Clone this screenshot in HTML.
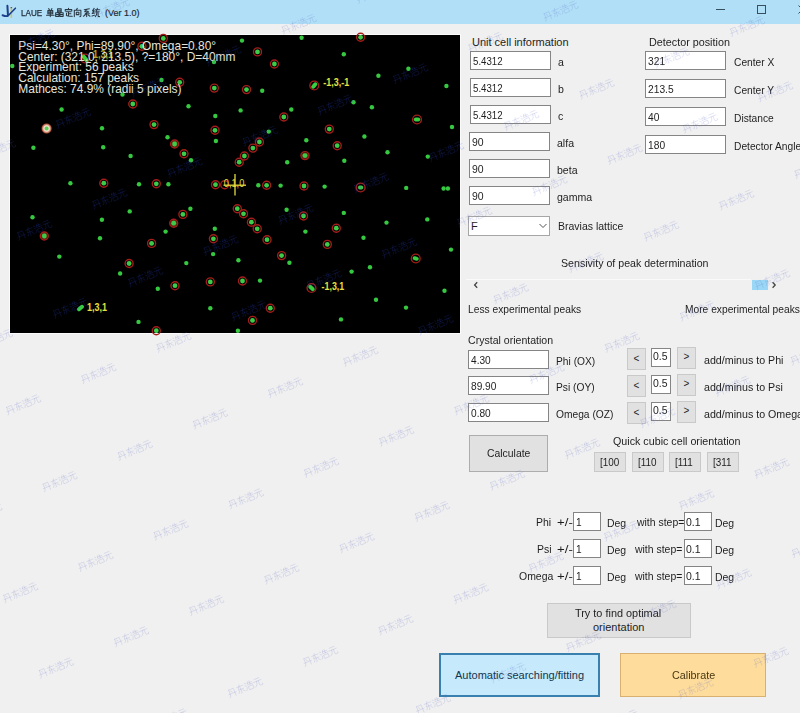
<!DOCTYPE html>
<html><head><meta charset="utf-8"><style>
html,body{margin:0;padding:0;}
body{width:800px;height:713px;position:relative;overflow:hidden;background:#f0f0f0;font-family:"Liberation Sans",sans-serif;}
.t{position:absolute;white-space:pre;}
#title{position:absolute;left:0;top:0;width:800px;height:24px;background:#b1dff7;}
.tb{position:absolute;box-sizing:border-box;border:1px solid #858585;background:#fff;}
.cb{position:absolute;box-sizing:border-box;border:1px solid #a6a6a6;background:#fff;}
.btn{position:absolute;box-sizing:border-box;border:1px solid #c9c9c9;background:#e1e1e1;}
svg{overflow:visible}
</style></head><body>
<div id="title"></div><svg style="position:absolute;left:0;top:0" width="20" height="22"><rect x="10.6" y="7.2" width="1.5" height="10.6" fill="#d6c24a"/><path d="M7.4 5.8 L8 15.6 Q6.5 16.8 2.6 15.2" fill="none" stroke="#1c3f8c" stroke-width="2" stroke-linecap="round"/><path d="M8.6 15.2 L15.4 8.2" fill="none" stroke="#1c3f8c" stroke-width="1.6" stroke-linecap="round"/><rect x="10.6" y="7" width="1.5" height="1.2" fill="#5a6070"/></svg><div class="t" style="left:21.00px;top:8.98px;font-size:9px;line-height:9px;color:#1c2a36;transform:scaleX(0.9);transform-origin:0 0;-webkit-text-stroke:0.25px #1c2a36;">LAUE</div><div class="t" style="left:105.00px;top:8.98px;font-size:9px;line-height:9px;color:#1c2a36;-webkit-text-stroke:0.2px #1c2a36;">(Ver 1.0)</div><svg style="position:absolute;left:0;top:0" width="120" height="24"><g fill="none" stroke="#2a3844" stroke-width="1.05" stroke-linecap="round" stroke-linejoin="round"><path transform="translate(46.20,8.40) scale(0.820)" d="M3 0.3 L3.9 1.6 M7 0.3 L6.1 1.6 M2 2.5 L8 2.5 L8 6.6 L2 6.6 Z M2 4.55 L8 4.55 M5 2.5 L5 10 M0.4 8.3 L9.6 8.3" vector-effect="non-scaling-stroke"/><path transform="translate(55.30,8.40) scale(0.820)" d="M2.8 0.4 h4.4 v3.6 h-4.4 Z M2.8 2.2 h4.4 M0.4 5.3 h4 v4.4 h-4 Z M0.4 7.5 h4 M5.6 5.3 h4 v4.4 h-4 Z M5.6 7.5 h4" vector-effect="non-scaling-stroke"/><path transform="translate(64.40,8.40) scale(0.820)" d="M5 0 L5 1.3 M1 3.2 L1 1.5 L9 1.5 L9 3.2 M2 4.2 L8 4.2 M5 4.2 L5 9.4 M5 6.6 L8 6.6 M2.7 5.8 L2.4 8.6 Q3.5 9.6 9.6 9.6" vector-effect="non-scaling-stroke"/><path transform="translate(73.50,8.40) scale(0.820)" d="M4.6 0 L3.6 1.6 M1 10 L1 2.2 L9 2.2 L9 9 Q9 10 7.8 10 M3.4 4.6 h3.2 v3 h-3.2 Z" vector-effect="non-scaling-stroke"/><path transform="translate(82.60,8.40) scale(0.820)" d="M8.2 0.4 L2 1.6 M5.2 1.6 L2.6 4 L7 4 L2.8 7 L8.2 6.4 M6.2 3.4 L7.4 4.6 M5 6.8 L5 10 M3 8.2 L1 9.6 M7 8.2 L9 9.6" vector-effect="non-scaling-stroke"/><path transform="translate(91.70,8.40) scale(0.820)" d="M3 0 L1 3 L3.2 3 L0.6 6.2 L3.8 5.6 M0.4 9.4 L3.8 8.2 M6.8 0 L6.8 1.1 M4.4 1.6 L9.6 1.6 M6.2 2 L5 4.4 L9.2 4.2 M6.2 5.2 Q6.2 8.4 4.4 10 M7.8 5.2 L7.8 9.2 Q7.8 10 9.6 10" vector-effect="non-scaling-stroke"/></g></svg><svg style="position:absolute;left:700px;top:0" width="100" height="24" fill="none" stroke="#36505e" stroke-width="1"><line x1="716" y1="9.5" x2="725" y2="9.5" transform="translate(-700,0)"/><rect x="57.5" y="5.5" width="8" height="8"/><path d="M98.5 5.5 L104 11 M98.5 13.5 L104 8"/></svg><div style="position:absolute;left:9px;top:34px;width:452px;height:300px;background:#fbfbfb"></div><svg style="position:absolute;left:10px;top:35px" width="450" height="298" viewBox="10 35 450 298"><defs><radialGradient id="bg"><stop offset="0" stop-color="#fff8f0"/><stop offset="0.5" stop-color="#f2d4c0"/><stop offset="0.78" stop-color="#b05a40"/><stop offset="1" stop-color="#501010" stop-opacity="0"/></radialGradient><filter id="bl" x="-50%" y="-50%" width="200%" height="200%"><feGaussianBlur stdDeviation="0.65"/></filter><filter id="bl2" x="-50%" y="-50%" width="200%" height="200%"><feGaussianBlur stdDeviation="0.45"/></filter></defs><rect x="10" y="35" width="450" height="298" fill="#000"/><g filter="url(#bl)"><circle cx="46.6" cy="128.5" r="5.8" fill="url(#bg)"/><circle cx="141.9" cy="46.3" r="4" fill="none" stroke="#a41e1a" stroke-width="1.4"/><circle cx="132.8" cy="104" r="4" fill="none" stroke="#a41e1a" stroke-width="1.4"/><circle cx="154" cy="124.6" r="4" fill="none" stroke="#a41e1a" stroke-width="1.4"/><circle cx="163.3" cy="38.4" r="4" fill="none" stroke="#a41e1a" stroke-width="1.4"/><circle cx="257.5" cy="51.9" r="4" fill="none" stroke="#a41e1a" stroke-width="1.4"/><circle cx="274.4" cy="64" r="4" fill="none" stroke="#a41e1a" stroke-width="1.4"/><circle cx="179.7" cy="82.3" r="4" fill="none" stroke="#a41e1a" stroke-width="1.4"/><circle cx="214.3" cy="88.1" r="4" fill="none" stroke="#a41e1a" stroke-width="1.4"/><circle cx="246.5" cy="89.6" r="4" fill="none" stroke="#a41e1a" stroke-width="1.4"/><circle cx="283.8" cy="117" r="4" fill="none" stroke="#a41e1a" stroke-width="1.4"/><circle cx="215" cy="130.3" r="4" fill="none" stroke="#a41e1a" stroke-width="1.4"/><circle cx="360.6" cy="37.3" r="4" fill="none" stroke="#a41e1a" stroke-width="1.4"/><circle cx="329.3" cy="129.1" r="4" fill="none" stroke="#a41e1a" stroke-width="1.4"/><circle cx="103.8" cy="183.2" r="4" fill="none" stroke="#a41e1a" stroke-width="1.4"/><circle cx="156.3" cy="183.8" r="4" fill="none" stroke="#a41e1a" stroke-width="1.4"/><circle cx="184" cy="153.8" r="4" fill="none" stroke="#a41e1a" stroke-width="1.4"/><circle cx="259.4" cy="142" r="4" fill="none" stroke="#a41e1a" stroke-width="1.4"/><circle cx="252.9" cy="148.1" r="4" fill="none" stroke="#a41e1a" stroke-width="1.4"/><circle cx="244.4" cy="156" r="4" fill="none" stroke="#a41e1a" stroke-width="1.4"/><circle cx="239.2" cy="162.2" r="4" fill="none" stroke="#a41e1a" stroke-width="1.4"/><circle cx="215.5" cy="184.7" r="4" fill="none" stroke="#a41e1a" stroke-width="1.4"/><circle cx="266.6" cy="185.3" r="4" fill="none" stroke="#a41e1a" stroke-width="1.4"/><circle cx="304" cy="186" r="4" fill="none" stroke="#a41e1a" stroke-width="1.4"/><circle cx="182.9" cy="214.4" r="4" fill="none" stroke="#a41e1a" stroke-width="1.4"/><circle cx="237.3" cy="208.7" r="4" fill="none" stroke="#a41e1a" stroke-width="1.4"/><circle cx="243.5" cy="213.8" r="4" fill="none" stroke="#a41e1a" stroke-width="1.4"/><circle cx="251.4" cy="222.2" r="4" fill="none" stroke="#a41e1a" stroke-width="1.4"/><circle cx="257.2" cy="228.8" r="4" fill="none" stroke="#a41e1a" stroke-width="1.4"/><circle cx="303.5" cy="216" r="4" fill="none" stroke="#a41e1a" stroke-width="1.4"/><circle cx="337.2" cy="145.7" r="4" fill="none" stroke="#a41e1a" stroke-width="1.4"/><circle cx="336.3" cy="228.2" r="4" fill="none" stroke="#a41e1a" stroke-width="1.4"/><circle cx="151.6" cy="243.4" r="4" fill="none" stroke="#a41e1a" stroke-width="1.4"/><circle cx="129.1" cy="263.5" r="4" fill="none" stroke="#a41e1a" stroke-width="1.4"/><circle cx="156.3" cy="330.7" r="4" fill="none" stroke="#a41e1a" stroke-width="1.4"/><circle cx="213.4" cy="238.8" r="4" fill="none" stroke="#a41e1a" stroke-width="1.4"/><circle cx="267" cy="239.7" r="4" fill="none" stroke="#a41e1a" stroke-width="1.4"/><circle cx="281.6" cy="255.6" r="4" fill="none" stroke="#a41e1a" stroke-width="1.4"/><circle cx="175" cy="285.7" r="4" fill="none" stroke="#a41e1a" stroke-width="1.4"/><circle cx="210.3" cy="281.9" r="4" fill="none" stroke="#a41e1a" stroke-width="1.4"/><circle cx="242.5" cy="281" r="4" fill="none" stroke="#a41e1a" stroke-width="1.4"/><circle cx="270.3" cy="308.2" r="4" fill="none" stroke="#a41e1a" stroke-width="1.4"/><circle cx="252.5" cy="320.4" r="4" fill="none" stroke="#a41e1a" stroke-width="1.4"/><circle cx="327.3" cy="244.4" r="4" fill="none" stroke="#a41e1a" stroke-width="1.4"/><circle cx="224.7" cy="184.7" r="4" fill="none" stroke="#a41e1a" stroke-width="1.4"/><circle cx="44.3" cy="236" r="4" fill="none" stroke="#a41e1a" stroke-width="1.4"/><circle cx="174.6" cy="144" r="4" fill="none" stroke="#a41e1a" stroke-width="1.4"/><circle cx="305" cy="155.6" r="4" fill="none" stroke="#a41e1a" stroke-width="1.4"/><circle cx="173.7" cy="223.2" r="4" fill="none" stroke="#a41e1a" stroke-width="1.4"/><circle cx="44.3" cy="236" r="3.2" fill="#b06028" fill-opacity="0.55"/><circle cx="174.6" cy="144" r="3.2" fill="#b06028" fill-opacity="0.55"/><circle cx="305" cy="155.6" r="3.2" fill="#b06028" fill-opacity="0.55"/><circle cx="173.7" cy="223.2" r="3.2" fill="#b06028" fill-opacity="0.55"/><circle cx="85.175" cy="58.5" r="4.4" fill="none" stroke="#a41e1a" stroke-width="1.4"/><circle cx="314.25" cy="85.5" r="4.4" fill="none" stroke="#a41e1a" stroke-width="1.4"/><circle cx="311.5" cy="288.0" r="4.4" fill="none" stroke="#a41e1a" stroke-width="1.4"/><circle cx="417.0" cy="119.5" r="4.4" fill="none" stroke="#a41e1a" stroke-width="1.4"/><circle cx="415.75" cy="258.5" r="4.4" fill="none" stroke="#a41e1a" stroke-width="1.4"/><circle cx="360.6" cy="187.5" r="4.4" fill="none" stroke="#a41e1a" stroke-width="1.4"/></g><g filter="url(#bl2)"><line x1="83.72" y1="56.7" x2="86.63" y2="60.3" stroke="#38d040" stroke-width="4" stroke-linecap="round"/><line x1="313.2" y1="86.7" x2="315.3" y2="84.3" stroke="#38d040" stroke-width="4" stroke-linecap="round"/><line x1="79.0" y1="309.2" x2="82.0" y2="306.8" stroke="#38d040" stroke-width="4" stroke-linecap="round"/><line x1="310.3" y1="286.8" x2="312.7" y2="289.2" stroke="#38d040" stroke-width="4" stroke-linecap="round"/><line x1="415.8" y1="119.5" x2="418.2" y2="119.5" stroke="#38d040" stroke-width="4" stroke-linecap="round"/><line x1="414.7" y1="258.2" x2="416.8" y2="258.8" stroke="#38d040" stroke-width="4" stroke-linecap="round"/><line x1="359.94" y1="187.5" x2="361.26" y2="187.5" stroke="#38d040" stroke-width="4" stroke-linecap="round"/><circle cx="12.3" cy="66" r="2.2" fill="#36c840"/><circle cx="122.5" cy="94.6" r="2.2" fill="#36c840"/><circle cx="61.6" cy="109.5" r="2.2" fill="#36c840"/><circle cx="102" cy="128.2" r="2.2" fill="#36c840"/><circle cx="242" cy="40.6" r="2.2" fill="#36c840"/><circle cx="301.6" cy="37.8" r="2.2" fill="#36c840"/><circle cx="214" cy="62" r="2.2" fill="#36c840"/><circle cx="161.5" cy="80" r="2.2" fill="#36c840"/><circle cx="262.2" cy="90.7" r="2.2" fill="#36c840"/><circle cx="188.5" cy="106.3" r="2.2" fill="#36c840"/><circle cx="240.6" cy="110.4" r="2.2" fill="#36c840"/><circle cx="291.3" cy="109.5" r="2.2" fill="#36c840"/><circle cx="215.3" cy="116" r="2.2" fill="#36c840"/><circle cx="268.8" cy="131.6" r="2.2" fill="#36c840"/><circle cx="343.8" cy="54.3" r="2.2" fill="#36c840"/><circle cx="408.4" cy="68.8" r="2.2" fill="#36c840"/><circle cx="378.4" cy="75.7" r="2.2" fill="#36c840"/><circle cx="446.4" cy="86" r="2.2" fill="#36c840"/><circle cx="353.5" cy="102.2" r="2.2" fill="#36c840"/><circle cx="371.9" cy="107.2" r="2.2" fill="#36c840"/><circle cx="452" cy="127" r="2.2" fill="#36c840"/><circle cx="33.4" cy="147.8" r="2.2" fill="#36c840"/><circle cx="103.2" cy="147.2" r="2.2" fill="#36c840"/><circle cx="130.6" cy="156" r="2.2" fill="#36c840"/><circle cx="70.4" cy="183.2" r="2.2" fill="#36c840"/><circle cx="139" cy="184.2" r="2.2" fill="#36c840"/><circle cx="32.5" cy="217.2" r="2.2" fill="#36c840"/><circle cx="129.7" cy="211.4" r="2.2" fill="#36c840"/><circle cx="101.9" cy="219.8" r="2.2" fill="#36c840"/><circle cx="167.5" cy="137.3" r="2.2" fill="#36c840"/><circle cx="191" cy="160.3" r="2.2" fill="#36c840"/><circle cx="215.9" cy="141" r="2.2" fill="#36c840"/><circle cx="306.3" cy="140.3" r="2.2" fill="#36c840"/><circle cx="287.2" cy="162.2" r="2.2" fill="#36c840"/><circle cx="168.4" cy="184.2" r="2.2" fill="#36c840"/><circle cx="258.3" cy="185.25" r="2.2" fill="#36c840"/><circle cx="280.6" cy="185.6" r="2.2" fill="#36c840"/><circle cx="190.4" cy="208.7" r="2.2" fill="#36c840"/><circle cx="165.6" cy="231.6" r="2.2" fill="#36c840"/><circle cx="214.8" cy="228.8" r="2.2" fill="#36c840"/><circle cx="286.6" cy="209.7" r="2.2" fill="#36c840"/><circle cx="305.4" cy="231.6" r="2.2" fill="#36c840"/><circle cx="364.4" cy="136.5" r="2.2" fill="#36c840"/><circle cx="344.3" cy="160.7" r="2.2" fill="#36c840"/><circle cx="387.5" cy="152.3" r="2.2" fill="#36c840"/><circle cx="427.8" cy="156.6" r="2.2" fill="#36c840"/><circle cx="324.6" cy="186.6" r="2.2" fill="#36c840"/><circle cx="406.2" cy="187.9" r="2.2" fill="#36c840"/><circle cx="443.6" cy="188.5" r="2.2" fill="#36c840"/><circle cx="447.9" cy="188.5" r="2.2" fill="#36c840"/><circle cx="343.8" cy="212.9" r="2.2" fill="#36c840"/><circle cx="386.5" cy="222.6" r="2.2" fill="#36c840"/><circle cx="427.3" cy="219.4" r="2.2" fill="#36c840"/><circle cx="100" cy="238.2" r="2.2" fill="#36c840"/><circle cx="59.3" cy="256.6" r="2.2" fill="#36c840"/><circle cx="120.1" cy="273.5" r="2.2" fill="#36c840"/><circle cx="157.8" cy="288.8" r="2.2" fill="#36c840"/><circle cx="138.5" cy="321.9" r="2.2" fill="#36c840"/><circle cx="213.1" cy="254.1" r="2.2" fill="#36c840"/><circle cx="186.3" cy="263.1" r="2.2" fill="#36c840"/><circle cx="238.4" cy="260.3" r="2.2" fill="#36c840"/><circle cx="289.4" cy="262.8" r="2.2" fill="#36c840"/><circle cx="260" cy="280.6" r="2.2" fill="#36c840"/><circle cx="210.3" cy="308.2" r="2.2" fill="#36c840"/><circle cx="237.9" cy="330.7" r="2.2" fill="#36c840"/><circle cx="363.5" cy="237.8" r="2.2" fill="#36c840"/><circle cx="451" cy="249.6" r="2.2" fill="#36c840"/><circle cx="370" cy="267.3" r="2.2" fill="#36c840"/><circle cx="351.6" cy="271.6" r="2.2" fill="#36c840"/><circle cx="444.5" cy="290.7" r="2.2" fill="#36c840"/><circle cx="376" cy="299.7" r="2.2" fill="#36c840"/><circle cx="406" cy="307.6" r="2.2" fill="#36c840"/><circle cx="341" cy="319.4" r="2.2" fill="#36c840"/><circle cx="141.9" cy="46.3" r="2.4" fill="#3ccc48"/><circle cx="132.8" cy="104" r="2.4" fill="#3ccc48"/><circle cx="154" cy="124.6" r="2.4" fill="#3ccc48"/><circle cx="163.3" cy="38.4" r="2.4" fill="#3ccc48"/><circle cx="257.5" cy="51.9" r="2.4" fill="#3ccc48"/><circle cx="274.4" cy="64" r="2.4" fill="#3ccc48"/><circle cx="179.7" cy="82.3" r="2.4" fill="#3ccc48"/><circle cx="214.3" cy="88.1" r="2.4" fill="#3ccc48"/><circle cx="246.5" cy="89.6" r="2.4" fill="#3ccc48"/><circle cx="283.8" cy="117" r="2.4" fill="#3ccc48"/><circle cx="215" cy="130.3" r="2.4" fill="#3ccc48"/><circle cx="360.6" cy="37.3" r="2.4" fill="#3ccc48"/><circle cx="329.3" cy="129.1" r="2.4" fill="#3ccc48"/><circle cx="103.8" cy="183.2" r="2.4" fill="#3ccc48"/><circle cx="156.3" cy="183.8" r="2.4" fill="#3ccc48"/><circle cx="184" cy="153.8" r="2.4" fill="#3ccc48"/><circle cx="259.4" cy="142" r="2.4" fill="#3ccc48"/><circle cx="252.9" cy="148.1" r="2.4" fill="#3ccc48"/><circle cx="244.4" cy="156" r="2.4" fill="#3ccc48"/><circle cx="239.2" cy="162.2" r="2.4" fill="#3ccc48"/><circle cx="215.5" cy="184.7" r="2.4" fill="#3ccc48"/><circle cx="266.6" cy="185.3" r="2.4" fill="#3ccc48"/><circle cx="304" cy="186" r="2.4" fill="#3ccc48"/><circle cx="182.9" cy="214.4" r="2.4" fill="#3ccc48"/><circle cx="237.3" cy="208.7" r="2.4" fill="#3ccc48"/><circle cx="243.5" cy="213.8" r="2.4" fill="#3ccc48"/><circle cx="251.4" cy="222.2" r="2.4" fill="#3ccc48"/><circle cx="257.2" cy="228.8" r="2.4" fill="#3ccc48"/><circle cx="303.5" cy="216" r="2.4" fill="#3ccc48"/><circle cx="337.2" cy="145.7" r="2.4" fill="#3ccc48"/><circle cx="336.3" cy="228.2" r="2.4" fill="#3ccc48"/><circle cx="151.6" cy="243.4" r="2.4" fill="#3ccc48"/><circle cx="129.1" cy="263.5" r="2.4" fill="#3ccc48"/><circle cx="156.3" cy="330.7" r="2.4" fill="#3ccc48"/><circle cx="213.4" cy="238.8" r="2.4" fill="#3ccc48"/><circle cx="267" cy="239.7" r="2.4" fill="#3ccc48"/><circle cx="281.6" cy="255.6" r="2.4" fill="#3ccc48"/><circle cx="175" cy="285.7" r="2.4" fill="#3ccc48"/><circle cx="210.3" cy="281.9" r="2.4" fill="#3ccc48"/><circle cx="242.5" cy="281" r="2.4" fill="#3ccc48"/><circle cx="270.3" cy="308.2" r="2.4" fill="#3ccc48"/><circle cx="252.5" cy="320.4" r="2.4" fill="#3ccc48"/><circle cx="327.3" cy="244.4" r="2.4" fill="#3ccc48"/><circle cx="44.3" cy="236" r="2.4" fill="#3ccc48"/><circle cx="174.6" cy="144" r="2.4" fill="#3ccc48"/><circle cx="305" cy="155.6" r="2.4" fill="#3ccc48"/><circle cx="173.7" cy="223.2" r="2.4" fill="#3ccc48"/><circle cx="46.6" cy="128.5" r="2" fill="#54d458"/></g><g stroke="#e4dc40" stroke-width="1.3" fill="none"><line x1="235" y1="174" x2="235" y2="195.5"/><line x1="223.5" y1="185.2" x2="246" y2="185.2"/></g><text x="223.8" y="187" font-family="Liberation Sans" font-size="10" fill="#e4dc40" textLength="20.5" lengthAdjust="spacingAndGlyphs">0,1,0</text><text x="93" y="58.4" font-family="Liberation Sans" font-weight="bold" font-size="10.2" fill="#e6e040" fill-opacity="0.75" textLength="20" lengthAdjust="spacingAndGlyphs">1,3,1</text><text x="323.3" y="86.10000000000001" font-family="Liberation Sans" font-weight="bold" font-size="10.2" fill="#e6e040" fill-opacity="1" textLength="25.8" lengthAdjust="spacingAndGlyphs">-1,3,-1</text><text x="86.9" y="311.4" font-family="Liberation Sans" font-weight="bold" font-size="10.2" fill="#e6e040" fill-opacity="1" textLength="20" lengthAdjust="spacingAndGlyphs">1,3,1</text><text x="321.6" y="290.4" font-family="Liberation Sans" font-weight="bold" font-size="10.2" fill="#e6e040" fill-opacity="1" textLength="22.6" lengthAdjust="spacingAndGlyphs">-1,3,1</text></svg><div class="t" style="left:18.30px;top:41.38px;font-size:11.95px;line-height:11.95px;color:#e4e4dc;">Psi=4.30°, Phi=89.90°, Omega=0.80°</div><div class="t" style="left:18.30px;top:52.28px;font-size:11.95px;line-height:11.95px;color:#e4e4dc;">Center: (321.0, 213.5), ?=180°, D=40mm</div><div class="t" style="left:18.30px;top:62.38px;font-size:11.95px;line-height:11.95px;color:#e4e4dc;">Experiment: 56 peaks</div><div class="t" style="left:18.30px;top:73.38px;font-size:11.95px;line-height:11.95px;color:#e4e4dc;">Calculation: 157 peaks</div><div class="t" style="left:18.30px;top:83.88px;font-size:11.95px;line-height:11.95px;color:#e4e4dc;">Mathces: 74.9% (radii 5 pixels)</div><div class="t" style="left:472.00px;top:37.19px;font-size:11px;line-height:11px;color:#1e1e1e;">Unit cell information</div><div class="tb" style="left:470px;top:51px;width:81px;height:19px"></div><div class="t" style="left:472.50px;top:56.29px;font-size:11px;line-height:11px;color:#1e1e1e;transform:scaleX(0.88);transform-origin:0 0;">5.4312</div><div class="t" style="left:557.50px;top:56.69px;font-size:11px;line-height:11px;color:#1e1e1e;transform:scaleX(0.96);transform-origin:0 0;">a</div><div class="tb" style="left:470px;top:78px;width:81px;height:19px"></div><div class="t" style="left:472.50px;top:83.29px;font-size:11px;line-height:11px;color:#1e1e1e;transform:scaleX(0.88);transform-origin:0 0;">5.4312</div><div class="t" style="left:557.50px;top:83.69px;font-size:11px;line-height:11px;color:#1e1e1e;transform:scaleX(0.96);transform-origin:0 0;">b</div><div class="tb" style="left:470px;top:105px;width:81px;height:19px"></div><div class="t" style="left:472.50px;top:110.29px;font-size:11px;line-height:11px;color:#1e1e1e;transform:scaleX(0.88);transform-origin:0 0;">5.4312</div><div class="t" style="left:557.50px;top:110.69px;font-size:11px;line-height:11px;color:#1e1e1e;transform:scaleX(0.96);transform-origin:0 0;">c</div><div class="tb" style="left:469px;top:132px;width:81px;height:19px"></div><div class="t" style="left:471.50px;top:137.29px;font-size:11px;line-height:11px;color:#1e1e1e;transform:scaleX(0.95);transform-origin:0 0;">90</div><div class="t" style="left:557.00px;top:137.69px;font-size:11px;line-height:11px;color:#1e1e1e;transform:scaleX(0.96);transform-origin:0 0;">alfa</div><div class="tb" style="left:469px;top:159px;width:81px;height:19px"></div><div class="t" style="left:471.50px;top:164.29px;font-size:11px;line-height:11px;color:#1e1e1e;transform:scaleX(0.95);transform-origin:0 0;">90</div><div class="t" style="left:557.00px;top:164.69px;font-size:11px;line-height:11px;color:#1e1e1e;transform:scaleX(0.96);transform-origin:0 0;">beta</div><div class="tb" style="left:469px;top:186px;width:81px;height:19px"></div><div class="t" style="left:471.50px;top:191.29px;font-size:11px;line-height:11px;color:#1e1e1e;transform:scaleX(0.95);transform-origin:0 0;">90</div><div class="t" style="left:557.00px;top:191.69px;font-size:11px;line-height:11px;color:#1e1e1e;transform:scaleX(0.96);transform-origin:0 0;">gamma</div><div class="cb" style="left:468px;top:216px;width:82px;height:20px"></div><div class="t" style="left:471.00px;top:221.19px;font-size:11px;line-height:11px;color:#1e1e1e;">F</div><svg style="position:absolute;left:537.5px;top:222px" width="10" height="8"><path d="M1.5 2 L5 5.5 L8.5 2" fill="none" stroke="#555" stroke-width="1"/></svg><div class="t" style="left:558.00px;top:220.69px;font-size:11px;line-height:11px;color:#1e1e1e;transform:scaleX(0.955);transform-origin:0 0;">Bravias lattice</div><div class="t" style="left:649.00px;top:37.19px;font-size:11px;line-height:11px;color:#1e1e1e;transform:scaleX(0.98);transform-origin:0 0;">Detector position</div><div class="tb" style="left:645px;top:51px;width:81px;height:19px"></div><div class="t" style="left:647.50px;top:56.29px;font-size:11px;line-height:11px;color:#1e1e1e;transform:scaleX(0.93);transform-origin:0 0;">321</div><div class="t" style="left:733.50px;top:56.69px;font-size:11px;line-height:11px;color:#1e1e1e;transform:scaleX(0.93);transform-origin:0 0;">Center X</div><div class="tb" style="left:645px;top:79px;width:81px;height:19px"></div><div class="t" style="left:647.50px;top:84.29px;font-size:11px;line-height:11px;color:#1e1e1e;transform:scaleX(0.93);transform-origin:0 0;">213.5</div><div class="t" style="left:733.50px;top:84.69px;font-size:11px;line-height:11px;color:#1e1e1e;transform:scaleX(0.93);transform-origin:0 0;">Center Y</div><div class="tb" style="left:645px;top:107px;width:81px;height:19px"></div><div class="t" style="left:647.50px;top:112.29px;font-size:11px;line-height:11px;color:#1e1e1e;transform:scaleX(0.93);transform-origin:0 0;">40</div><div class="t" style="left:733.50px;top:112.69px;font-size:11px;line-height:11px;color:#1e1e1e;transform:scaleX(0.93);transform-origin:0 0;">Distance</div><div class="tb" style="left:645px;top:135px;width:81px;height:19px"></div><div class="t" style="left:647.50px;top:140.29px;font-size:11px;line-height:11px;color:#1e1e1e;transform:scaleX(0.93);transform-origin:0 0;">180</div><div class="t" style="left:733.50px;top:140.69px;font-size:11px;line-height:11px;color:#1e1e1e;transform:scaleX(0.93);transform-origin:0 0;">Detector Angle</div><div class="t" style="left:561.00px;top:258.19px;font-size:11px;line-height:11px;color:#1e1e1e;transform:scaleX(0.965);transform-origin:0 0;">Sensivity of peak determination</div><div style="position:absolute;left:466px;top:279px;width:285px;height:1px;background:#fafafa"></div><div style="position:absolute;left:752px;top:280px;width:16px;height:10px;background:#9ad6f6"></div><svg style="position:absolute;left:471px;top:280px" width="10" height="10"><path d="M6.2 2.2 L3.6 5 L6.2 7.8" fill="none" stroke="#444" stroke-width="1.3"/></svg><svg style="position:absolute;left:769px;top:280px" width="10" height="10"><path d="M3.6 2.2 L6.2 5 L3.6 7.8" fill="none" stroke="#444" stroke-width="1.3"/></svg><div class="t" style="left:468.00px;top:303.69px;font-size:11px;line-height:11px;color:#1e1e1e;transform:scaleX(0.93);transform-origin:0 0;">Less experimental peaks</div><div class="t" style="left:685.00px;top:303.69px;font-size:11px;line-height:11px;color:#1e1e1e;transform:scaleX(0.93);transform-origin:0 0;">More experimental peaks</div><div class="t" style="left:468.00px;top:335.19px;font-size:11px;line-height:11px;color:#1e1e1e;transform:scaleX(0.96);transform-origin:0 0;">Crystal orientation</div><div class="tb" style="left:468px;top:350px;width:81px;height:19px"></div><div class="t" style="left:470.50px;top:355.29px;font-size:11px;line-height:11px;color:#1e1e1e;transform:scaleX(0.92);transform-origin:0 0;">4.30</div><div class="t" style="left:556.00px;top:355.69px;font-size:11px;line-height:11px;color:#1e1e1e;transform:scaleX(0.93);transform-origin:0 0;">Phi (OX)</div><div class="btn" style="left:627px;top:348px;width:19px;height:22px;border-color:#c9c9c9;background:#e1e1e1"></div><div class="t" style="left:633.50px;top:353.54px;font-size:10px;line-height:10px;color:#1e1e1e;">&lt;</div><div class="tb" style="left:651px;top:348px;width:20px;height:19px"></div><div class="t" style="left:653.00px;top:351.29px;font-size:11px;line-height:11px;color:#1e1e1e;transform:scaleX(0.95);transform-origin:0 0;">0.5</div><div class="btn" style="left:677px;top:347px;width:19px;height:22px;border-color:#c9c9c9;background:#e1e1e1"></div><div class="t" style="left:683.50px;top:352.14px;font-size:10px;line-height:10px;color:#1e1e1e;">&gt;</div><div class="t" style="left:704.00px;top:354.99px;font-size:11px;line-height:11px;color:#1e1e1e;transform:scaleX(0.97);transform-origin:0 0;">add/minus to Phi</div><div class="tb" style="left:468px;top:376px;width:81px;height:19px"></div><div class="t" style="left:470.50px;top:381.29px;font-size:11px;line-height:11px;color:#1e1e1e;transform:scaleX(0.92);transform-origin:0 0;">89.90</div><div class="t" style="left:556.00px;top:381.69px;font-size:11px;line-height:11px;color:#1e1e1e;transform:scaleX(0.93);transform-origin:0 0;">Psi (OY)</div><div class="btn" style="left:627px;top:375px;width:19px;height:22px;border-color:#c9c9c9;background:#e1e1e1"></div><div class="t" style="left:633.50px;top:380.54px;font-size:10px;line-height:10px;color:#1e1e1e;">&lt;</div><div class="tb" style="left:651px;top:375px;width:20px;height:19px"></div><div class="t" style="left:653.00px;top:378.29px;font-size:11px;line-height:11px;color:#1e1e1e;transform:scaleX(0.95);transform-origin:0 0;">0.5</div><div class="btn" style="left:677px;top:374px;width:19px;height:22px;border-color:#c9c9c9;background:#e1e1e1"></div><div class="t" style="left:683.50px;top:379.14px;font-size:10px;line-height:10px;color:#1e1e1e;">&gt;</div><div class="t" style="left:704.00px;top:381.99px;font-size:11px;line-height:11px;color:#1e1e1e;transform:scaleX(0.97);transform-origin:0 0;">add/minus to Psi</div><div class="tb" style="left:468px;top:403px;width:81px;height:19px"></div><div class="t" style="left:470.50px;top:408.29px;font-size:11px;line-height:11px;color:#1e1e1e;transform:scaleX(0.92);transform-origin:0 0;">0.80</div><div class="t" style="left:556.00px;top:408.69px;font-size:11px;line-height:11px;color:#1e1e1e;transform:scaleX(0.93);transform-origin:0 0;">Omega (OZ)</div><div class="btn" style="left:627px;top:402px;width:19px;height:22px;border-color:#c9c9c9;background:#e1e1e1"></div><div class="t" style="left:633.50px;top:407.54px;font-size:10px;line-height:10px;color:#1e1e1e;">&lt;</div><div class="tb" style="left:651px;top:402px;width:20px;height:19px"></div><div class="t" style="left:653.00px;top:405.29px;font-size:11px;line-height:11px;color:#1e1e1e;transform:scaleX(0.95);transform-origin:0 0;">0.5</div><div class="btn" style="left:677px;top:401px;width:19px;height:22px;border-color:#c9c9c9;background:#e1e1e1"></div><div class="t" style="left:683.50px;top:406.14px;font-size:10px;line-height:10px;color:#1e1e1e;">&gt;</div><div class="t" style="left:704.00px;top:408.99px;font-size:11px;line-height:11px;color:#1e1e1e;transform:scaleX(0.97);transform-origin:0 0;">add/minus to Omega</div><div class="btn" style="left:469px;top:435px;width:79px;height:37px;border-color:#adadad;background:#e1e1e1"></div><div class="t" style="left:486.50px;top:448.19px;font-size:11px;line-height:11px;color:#1e1e1e;transform:scaleX(0.945);transform-origin:0 0;">Calculate</div><div class="t" style="left:613.00px;top:436.49px;font-size:11px;line-height:11px;color:#1e1e1e;transform:scaleX(0.974);transform-origin:0 0;">Quick cubic cell orientation</div><div class="btn" style="left:594px;top:452px;width:32px;height:20px;border-color:#c9c9c9;background:#e1e1e1"></div><div class="t" style="left:599.50px;top:456.69px;font-size:11px;line-height:11px;color:#1e1e1e;transform:scaleX(0.9);transform-origin:0 0;">[100</div><div class="btn" style="left:632px;top:452px;width:32px;height:20px;border-color:#c9c9c9;background:#e1e1e1"></div><div class="t" style="left:637.50px;top:456.69px;font-size:11px;line-height:11px;color:#1e1e1e;transform:scaleX(0.9);transform-origin:0 0;">[110</div><div class="btn" style="left:669px;top:452px;width:32px;height:20px;border-color:#c9c9c9;background:#e1e1e1"></div><div class="t" style="left:674.50px;top:456.69px;font-size:11px;line-height:11px;color:#1e1e1e;transform:scaleX(0.9);transform-origin:0 0;">[111</div><div class="btn" style="left:707px;top:452px;width:32px;height:20px;border-color:#c9c9c9;background:#e1e1e1"></div><div class="t" style="left:712.50px;top:456.69px;font-size:11px;line-height:11px;color:#1e1e1e;transform:scaleX(0.9);transform-origin:0 0;">[311</div><div class="tb" style="left:573px;top:512px;width:28px;height:19px"></div><div class="t" style="left:575.50px;top:517.29px;font-size:11px;line-height:11px;color:#1e1e1e;transform:scaleX(0.92);transform-origin:0 0;">1</div><div class="tb" style="left:684px;top:512px;width:28px;height:19px"></div><div class="t" style="left:686.00px;top:517.29px;font-size:11px;line-height:11px;color:#1e1e1e;transform:scaleX(0.95);transform-origin:0 0;">0.1</div><div class="t" style="left:536.00px;top:517.19px;font-size:11px;line-height:11px;color:#1e1e1e;transform:scaleX(0.95);transform-origin:0 0;">Phi</div><div class="t" style="left:556.50px;top:517.19px;font-size:11px;line-height:11px;color:#1e1e1e;transform:scaleX(1.2);transform-origin:0 0;">+/-</div><div class="t" style="left:636.50px;top:517.19px;font-size:11px;line-height:11px;color:#1e1e1e;transform:scaleX(0.95);transform-origin:0 0;">with step=</div><div class="t" style="left:607.00px;top:517.69px;font-size:11px;line-height:11px;color:#1e1e1e;transform:scaleX(0.95);transform-origin:0 0;">Deg</div><div class="t" style="left:715.00px;top:517.69px;font-size:11px;line-height:11px;color:#1e1e1e;transform:scaleX(0.95);transform-origin:0 0;">Deg</div><div class="tb" style="left:573px;top:539px;width:28px;height:19px"></div><div class="t" style="left:575.50px;top:544.29px;font-size:11px;line-height:11px;color:#1e1e1e;transform:scaleX(0.92);transform-origin:0 0;">1</div><div class="tb" style="left:684px;top:539px;width:28px;height:19px"></div><div class="t" style="left:686.00px;top:544.29px;font-size:11px;line-height:11px;color:#1e1e1e;transform:scaleX(0.95);transform-origin:0 0;">0.1</div><div class="t" style="left:536.50px;top:544.19px;font-size:11px;line-height:11px;color:#1e1e1e;transform:scaleX(0.95);transform-origin:0 0;">Psi</div><div class="t" style="left:556.50px;top:544.19px;font-size:11px;line-height:11px;color:#1e1e1e;transform:scaleX(1.2);transform-origin:0 0;">+/-</div><div class="t" style="left:635.00px;top:544.19px;font-size:11px;line-height:11px;color:#1e1e1e;transform:scaleX(0.95);transform-origin:0 0;">with step=</div><div class="t" style="left:607.00px;top:544.69px;font-size:11px;line-height:11px;color:#1e1e1e;transform:scaleX(0.95);transform-origin:0 0;">Deg</div><div class="t" style="left:715.00px;top:544.69px;font-size:11px;line-height:11px;color:#1e1e1e;transform:scaleX(0.95);transform-origin:0 0;">Deg</div><div class="tb" style="left:573px;top:566px;width:28px;height:19px"></div><div class="t" style="left:575.50px;top:571.29px;font-size:11px;line-height:11px;color:#1e1e1e;transform:scaleX(0.92);transform-origin:0 0;">1</div><div class="tb" style="left:684px;top:566px;width:28px;height:19px"></div><div class="t" style="left:686.00px;top:571.29px;font-size:11px;line-height:11px;color:#1e1e1e;transform:scaleX(0.95);transform-origin:0 0;">0.1</div><div class="t" style="left:518.50px;top:571.19px;font-size:11px;line-height:11px;color:#1e1e1e;transform:scaleX(0.95);transform-origin:0 0;">Omega</div><div class="t" style="left:556.50px;top:571.19px;font-size:11px;line-height:11px;color:#1e1e1e;transform:scaleX(1.2);transform-origin:0 0;">+/-</div><div class="t" style="left:635.00px;top:571.19px;font-size:11px;line-height:11px;color:#1e1e1e;transform:scaleX(0.95);transform-origin:0 0;">with step=</div><div class="t" style="left:607.00px;top:571.69px;font-size:11px;line-height:11px;color:#1e1e1e;transform:scaleX(0.95);transform-origin:0 0;">Deg</div><div class="t" style="left:715.00px;top:571.69px;font-size:11px;line-height:11px;color:#1e1e1e;transform:scaleX(0.95);transform-origin:0 0;">Deg</div><div class="btn" style="left:547px;top:603px;width:144px;height:35px;border-color:#c9c9c9;background:#e1e1e1"></div><div class="t" style="left:575.00px;top:608.29px;font-size:11px;line-height:11px;color:#1e1e1e;transform:scaleX(0.99);transform-origin:0 0;">Try to find optimal</div><div class="t" style="left:593.00px;top:621.99px;font-size:11px;line-height:11px;color:#1e1e1e;">orientation</div><div style="position:absolute;left:439px;top:653px;width:157px;height:40px;border:2px solid #3a80ae;background:#c6eafc"></div><div class="t" style="left:455.00px;top:669.69px;font-size:11px;line-height:11px;color:#13344e;">Automatic searching/fitting</div><div style="position:absolute;left:620px;top:653px;width:144px;height:42px;border:1px solid #d8b070;background:#fddc9c"></div><div class="t" style="left:671.50px;top:669.69px;font-size:11px;line-height:11px;color:#4a3810;transform:scaleX(0.98);transform-origin:0 0;">Calibrate</div><svg style="position:absolute;left:0;top:0" width="800" height="713"><g transform="translate(36.6,39.4) rotate(-22.6)"><g fill="none" stroke="rgba(50,80,240,0.2)" stroke-width="0.9" stroke-linecap="round" stroke-linejoin="round"><path transform="translate(-18.00,-4.50) scale(0.860)" d="M2.2 1 L2.2 6 Q2.2 9 0.5 10 M2.2 1 L8 1 L8 10 M0.5 6 L9.6 6 M4 3 L5.2 4.4" vector-effect="non-scaling-stroke"/><path transform="translate(-8.80,-4.50) scale(0.860)" d="M1 2 L9 2 M5 0 L2 5.6 L8.6 5.6 M5 3.6 L5 9.4 Q5 10 4 10 M3 7 L1.4 9.2 M7 7 L9 9.2" vector-effect="non-scaling-stroke"/><path transform="translate(0.40,-4.50) scale(0.860)" d="M0.6 0.8 L1.6 1.8 M0.2 3.8 L1.6 4.8 M0.4 9.6 L2 6.6 M4.6 0.4 L3.6 2.4 M3.8 2 L9 2 M6.6 0 L6.6 4 M3 4 L9.6 4 M4 6 h5.2 v4 h-5.2 Z" vector-effect="non-scaling-stroke"/><path transform="translate(9.60,-4.50) scale(0.860)" d="M2 1 L8 1 M0.4 4 L9.6 4 M4 4 Q4 8.6 0.8 10 M6 4 L6 9 Q6 10 7 10 L9.6 10 L9.6 8.4" vector-effect="non-scaling-stroke"/></g></g><g transform="translate(111.8,8.1) rotate(-22.6)"><g fill="none" stroke="rgba(90,100,190,0.18)" stroke-width="0.9" stroke-linecap="round" stroke-linejoin="round"><path transform="translate(-18.00,-4.50) scale(0.860)" d="M2.2 1 L2.2 6 Q2.2 9 0.5 10 M2.2 1 L8 1 L8 10 M0.5 6 L9.6 6 M4 3 L5.2 4.4" vector-effect="non-scaling-stroke"/><path transform="translate(-8.80,-4.50) scale(0.860)" d="M1 2 L9 2 M5 0 L2 5.6 L8.6 5.6 M5 3.6 L5 9.4 Q5 10 4 10 M3 7 L1.4 9.2 M7 7 L9 9.2" vector-effect="non-scaling-stroke"/><path transform="translate(0.40,-4.50) scale(0.860)" d="M0.6 0.8 L1.6 1.8 M0.2 3.8 L1.6 4.8 M0.4 9.6 L2 6.6 M4.6 0.4 L3.6 2.4 M3.8 2 L9 2 M6.6 0 L6.6 4 M3 4 L9.6 4 M4 6 h5.2 v4 h-5.2 Z" vector-effect="non-scaling-stroke"/><path transform="translate(9.60,-4.50) scale(0.860)" d="M2 1 L8 1 M0.4 4 L9.6 4 M4 4 Q4 8.6 0.8 10 M6 4 L6 9 Q6 10 7 10 L9.6 10 L9.6 8.4" vector-effect="non-scaling-stroke"/></g></g><g transform="translate(-2.3,149.4) rotate(-22.6)"><g fill="none" stroke="rgba(90,100,190,0.18)" stroke-width="0.9" stroke-linecap="round" stroke-linejoin="round"><path transform="translate(-18.00,-4.50) scale(0.860)" d="M2.2 1 L2.2 6 Q2.2 9 0.5 10 M2.2 1 L8 1 L8 10 M0.5 6 L9.6 6 M4 3 L5.2 4.4" vector-effect="non-scaling-stroke"/><path transform="translate(-8.80,-4.50) scale(0.860)" d="M1 2 L9 2 M5 0 L2 5.6 L8.6 5.6 M5 3.6 L5 9.4 Q5 10 4 10 M3 7 L1.4 9.2 M7 7 L9 9.2" vector-effect="non-scaling-stroke"/><path transform="translate(0.40,-4.50) scale(0.860)" d="M0.6 0.8 L1.6 1.8 M0.2 3.8 L1.6 4.8 M0.4 9.6 L2 6.6 M4.6 0.4 L3.6 2.4 M3.8 2 L9 2 M6.6 0 L6.6 4 M3 4 L9.6 4 M4 6 h5.2 v4 h-5.2 Z" vector-effect="non-scaling-stroke"/><path transform="translate(9.60,-4.50) scale(0.860)" d="M2 1 L8 1 M0.4 4 L9.6 4 M4 4 Q4 8.6 0.8 10 M6 4 L6 9 Q6 10 7 10 L9.6 10 L9.6 8.4" vector-effect="non-scaling-stroke"/></g></g><g transform="translate(72.9,118.1) rotate(-22.6)"><g fill="none" stroke="rgba(50,80,240,0.2)" stroke-width="0.9" stroke-linecap="round" stroke-linejoin="round"><path transform="translate(-18.00,-4.50) scale(0.860)" d="M2.2 1 L2.2 6 Q2.2 9 0.5 10 M2.2 1 L8 1 L8 10 M0.5 6 L9.6 6 M4 3 L5.2 4.4" vector-effect="non-scaling-stroke"/><path transform="translate(-8.80,-4.50) scale(0.860)" d="M1 2 L9 2 M5 0 L2 5.6 L8.6 5.6 M5 3.6 L5 9.4 Q5 10 4 10 M3 7 L1.4 9.2 M7 7 L9 9.2" vector-effect="non-scaling-stroke"/><path transform="translate(0.40,-4.50) scale(0.860)" d="M0.6 0.8 L1.6 1.8 M0.2 3.8 L1.6 4.8 M0.4 9.6 L2 6.6 M4.6 0.4 L3.6 2.4 M3.8 2 L9 2 M6.6 0 L6.6 4 M3 4 L9.6 4 M4 6 h5.2 v4 h-5.2 Z" vector-effect="non-scaling-stroke"/><path transform="translate(9.60,-4.50) scale(0.860)" d="M2 1 L8 1 M0.4 4 L9.6 4 M4 4 Q4 8.6 0.8 10 M6 4 L6 9 Q6 10 7 10 L9.6 10 L9.6 8.4" vector-effect="non-scaling-stroke"/></g></g><g transform="translate(148.1,86.8) rotate(-22.6)"><g fill="none" stroke="rgba(50,80,240,0.2)" stroke-width="0.9" stroke-linecap="round" stroke-linejoin="round"><path transform="translate(-18.00,-4.50) scale(0.860)" d="M2.2 1 L2.2 6 Q2.2 9 0.5 10 M2.2 1 L8 1 L8 10 M0.5 6 L9.6 6 M4 3 L5.2 4.4" vector-effect="non-scaling-stroke"/><path transform="translate(-8.80,-4.50) scale(0.860)" d="M1 2 L9 2 M5 0 L2 5.6 L8.6 5.6 M5 3.6 L5 9.4 Q5 10 4 10 M3 7 L1.4 9.2 M7 7 L9 9.2" vector-effect="non-scaling-stroke"/><path transform="translate(0.40,-4.50) scale(0.860)" d="M0.6 0.8 L1.6 1.8 M0.2 3.8 L1.6 4.8 M0.4 9.6 L2 6.6 M4.6 0.4 L3.6 2.4 M3.8 2 L9 2 M6.6 0 L6.6 4 M3 4 L9.6 4 M4 6 h5.2 v4 h-5.2 Z" vector-effect="non-scaling-stroke"/><path transform="translate(9.60,-4.50) scale(0.860)" d="M2 1 L8 1 M0.4 4 L9.6 4 M4 4 Q4 8.6 0.8 10 M6 4 L6 9 Q6 10 7 10 L9.6 10 L9.6 8.4" vector-effect="non-scaling-stroke"/></g></g><g transform="translate(223.3,55.5) rotate(-22.6)"><g fill="none" stroke="rgba(50,80,240,0.2)" stroke-width="0.9" stroke-linecap="round" stroke-linejoin="round"><path transform="translate(-18.00,-4.50) scale(0.860)" d="M2.2 1 L2.2 6 Q2.2 9 0.5 10 M2.2 1 L8 1 L8 10 M0.5 6 L9.6 6 M4 3 L5.2 4.4" vector-effect="non-scaling-stroke"/><path transform="translate(-8.80,-4.50) scale(0.860)" d="M1 2 L9 2 M5 0 L2 5.6 L8.6 5.6 M5 3.6 L5 9.4 Q5 10 4 10 M3 7 L1.4 9.2 M7 7 L9 9.2" vector-effect="non-scaling-stroke"/><path transform="translate(0.40,-4.50) scale(0.860)" d="M0.6 0.8 L1.6 1.8 M0.2 3.8 L1.6 4.8 M0.4 9.6 L2 6.6 M4.6 0.4 L3.6 2.4 M3.8 2 L9 2 M6.6 0 L6.6 4 M3 4 L9.6 4 M4 6 h5.2 v4 h-5.2 Z" vector-effect="non-scaling-stroke"/><path transform="translate(9.60,-4.50) scale(0.860)" d="M2 1 L8 1 M0.4 4 L9.6 4 M4 4 Q4 8.6 0.8 10 M6 4 L6 9 Q6 10 7 10 L9.6 10 L9.6 8.4" vector-effect="non-scaling-stroke"/></g></g><g transform="translate(298.5,24.2) rotate(-22.6)"><g fill="none" stroke="rgba(90,100,190,0.18)" stroke-width="0.9" stroke-linecap="round" stroke-linejoin="round"><path transform="translate(-18.00,-4.50) scale(0.860)" d="M2.2 1 L2.2 6 Q2.2 9 0.5 10 M2.2 1 L8 1 L8 10 M0.5 6 L9.6 6 M4 3 L5.2 4.4" vector-effect="non-scaling-stroke"/><path transform="translate(-8.80,-4.50) scale(0.860)" d="M1 2 L9 2 M5 0 L2 5.6 L8.6 5.6 M5 3.6 L5 9.4 Q5 10 4 10 M3 7 L1.4 9.2 M7 7 L9 9.2" vector-effect="non-scaling-stroke"/><path transform="translate(0.40,-4.50) scale(0.860)" d="M0.6 0.8 L1.6 1.8 M0.2 3.8 L1.6 4.8 M0.4 9.6 L2 6.6 M4.6 0.4 L3.6 2.4 M3.8 2 L9 2 M6.6 0 L6.6 4 M3 4 L9.6 4 M4 6 h5.2 v4 h-5.2 Z" vector-effect="non-scaling-stroke"/><path transform="translate(9.60,-4.50) scale(0.860)" d="M2 1 L8 1 M0.4 4 L9.6 4 M4 4 Q4 8.6 0.8 10 M6 4 L6 9 Q6 10 7 10 L9.6 10 L9.6 8.4" vector-effect="non-scaling-stroke"/></g></g><g transform="translate(373.7,-7.1) rotate(-22.6)"><g fill="none" stroke="rgba(90,100,190,0.18)" stroke-width="0.9" stroke-linecap="round" stroke-linejoin="round"><path transform="translate(-18.00,-4.50) scale(0.860)" d="M2.2 1 L2.2 6 Q2.2 9 0.5 10 M2.2 1 L8 1 L8 10 M0.5 6 L9.6 6 M4 3 L5.2 4.4" vector-effect="non-scaling-stroke"/><path transform="translate(-8.80,-4.50) scale(0.860)" d="M1 2 L9 2 M5 0 L2 5.6 L8.6 5.6 M5 3.6 L5 9.4 Q5 10 4 10 M3 7 L1.4 9.2 M7 7 L9 9.2" vector-effect="non-scaling-stroke"/><path transform="translate(0.40,-4.50) scale(0.860)" d="M0.6 0.8 L1.6 1.8 M0.2 3.8 L1.6 4.8 M0.4 9.6 L2 6.6 M4.6 0.4 L3.6 2.4 M3.8 2 L9 2 M6.6 0 L6.6 4 M3 4 L9.6 4 M4 6 h5.2 v4 h-5.2 Z" vector-effect="non-scaling-stroke"/><path transform="translate(9.60,-4.50) scale(0.860)" d="M2 1 L8 1 M0.4 4 L9.6 4 M4 4 Q4 8.6 0.8 10 M6 4 L6 9 Q6 10 7 10 L9.6 10 L9.6 8.4" vector-effect="non-scaling-stroke"/></g></g><g transform="translate(34.0,229.9) rotate(-22.6)"><g fill="none" stroke="rgba(50,80,240,0.2)" stroke-width="0.9" stroke-linecap="round" stroke-linejoin="round"><path transform="translate(-18.00,-4.50) scale(0.860)" d="M2.2 1 L2.2 6 Q2.2 9 0.5 10 M2.2 1 L8 1 L8 10 M0.5 6 L9.6 6 M4 3 L5.2 4.4" vector-effect="non-scaling-stroke"/><path transform="translate(-8.80,-4.50) scale(0.860)" d="M1 2 L9 2 M5 0 L2 5.6 L8.6 5.6 M5 3.6 L5 9.4 Q5 10 4 10 M3 7 L1.4 9.2 M7 7 L9 9.2" vector-effect="non-scaling-stroke"/><path transform="translate(0.40,-4.50) scale(0.860)" d="M0.6 0.8 L1.6 1.8 M0.2 3.8 L1.6 4.8 M0.4 9.6 L2 6.6 M4.6 0.4 L3.6 2.4 M3.8 2 L9 2 M6.6 0 L6.6 4 M3 4 L9.6 4 M4 6 h5.2 v4 h-5.2 Z" vector-effect="non-scaling-stroke"/><path transform="translate(9.60,-4.50) scale(0.860)" d="M2 1 L8 1 M0.4 4 L9.6 4 M4 4 Q4 8.6 0.8 10 M6 4 L6 9 Q6 10 7 10 L9.6 10 L9.6 8.4" vector-effect="non-scaling-stroke"/></g></g><g transform="translate(109.2,198.6) rotate(-22.6)"><g fill="none" stroke="rgba(50,80,240,0.2)" stroke-width="0.9" stroke-linecap="round" stroke-linejoin="round"><path transform="translate(-18.00,-4.50) scale(0.860)" d="M2.2 1 L2.2 6 Q2.2 9 0.5 10 M2.2 1 L8 1 L8 10 M0.5 6 L9.6 6 M4 3 L5.2 4.4" vector-effect="non-scaling-stroke"/><path transform="translate(-8.80,-4.50) scale(0.860)" d="M1 2 L9 2 M5 0 L2 5.6 L8.6 5.6 M5 3.6 L5 9.4 Q5 10 4 10 M3 7 L1.4 9.2 M7 7 L9 9.2" vector-effect="non-scaling-stroke"/><path transform="translate(0.40,-4.50) scale(0.860)" d="M0.6 0.8 L1.6 1.8 M0.2 3.8 L1.6 4.8 M0.4 9.6 L2 6.6 M4.6 0.4 L3.6 2.4 M3.8 2 L9 2 M6.6 0 L6.6 4 M3 4 L9.6 4 M4 6 h5.2 v4 h-5.2 Z" vector-effect="non-scaling-stroke"/><path transform="translate(9.60,-4.50) scale(0.860)" d="M2 1 L8 1 M0.4 4 L9.6 4 M4 4 Q4 8.6 0.8 10 M6 4 L6 9 Q6 10 7 10 L9.6 10 L9.6 8.4" vector-effect="non-scaling-stroke"/></g></g><g transform="translate(184.4,167.3) rotate(-22.6)"><g fill="none" stroke="rgba(50,80,240,0.2)" stroke-width="0.9" stroke-linecap="round" stroke-linejoin="round"><path transform="translate(-18.00,-4.50) scale(0.860)" d="M2.2 1 L2.2 6 Q2.2 9 0.5 10 M2.2 1 L8 1 L8 10 M0.5 6 L9.6 6 M4 3 L5.2 4.4" vector-effect="non-scaling-stroke"/><path transform="translate(-8.80,-4.50) scale(0.860)" d="M1 2 L9 2 M5 0 L2 5.6 L8.6 5.6 M5 3.6 L5 9.4 Q5 10 4 10 M3 7 L1.4 9.2 M7 7 L9 9.2" vector-effect="non-scaling-stroke"/><path transform="translate(0.40,-4.50) scale(0.860)" d="M0.6 0.8 L1.6 1.8 M0.2 3.8 L1.6 4.8 M0.4 9.6 L2 6.6 M4.6 0.4 L3.6 2.4 M3.8 2 L9 2 M6.6 0 L6.6 4 M3 4 L9.6 4 M4 6 h5.2 v4 h-5.2 Z" vector-effect="non-scaling-stroke"/><path transform="translate(9.60,-4.50) scale(0.860)" d="M2 1 L8 1 M0.4 4 L9.6 4 M4 4 Q4 8.6 0.8 10 M6 4 L6 9 Q6 10 7 10 L9.6 10 L9.6 8.4" vector-effect="non-scaling-stroke"/></g></g><g transform="translate(259.6,136.0) rotate(-22.6)"><g fill="none" stroke="rgba(50,80,240,0.2)" stroke-width="0.9" stroke-linecap="round" stroke-linejoin="round"><path transform="translate(-18.00,-4.50) scale(0.860)" d="M2.2 1 L2.2 6 Q2.2 9 0.5 10 M2.2 1 L8 1 L8 10 M0.5 6 L9.6 6 M4 3 L5.2 4.4" vector-effect="non-scaling-stroke"/><path transform="translate(-8.80,-4.50) scale(0.860)" d="M1 2 L9 2 M5 0 L2 5.6 L8.6 5.6 M5 3.6 L5 9.4 Q5 10 4 10 M3 7 L1.4 9.2 M7 7 L9 9.2" vector-effect="non-scaling-stroke"/><path transform="translate(0.40,-4.50) scale(0.860)" d="M0.6 0.8 L1.6 1.8 M0.2 3.8 L1.6 4.8 M0.4 9.6 L2 6.6 M4.6 0.4 L3.6 2.4 M3.8 2 L9 2 M6.6 0 L6.6 4 M3 4 L9.6 4 M4 6 h5.2 v4 h-5.2 Z" vector-effect="non-scaling-stroke"/><path transform="translate(9.60,-4.50) scale(0.860)" d="M2 1 L8 1 M0.4 4 L9.6 4 M4 4 Q4 8.6 0.8 10 M6 4 L6 9 Q6 10 7 10 L9.6 10 L9.6 8.4" vector-effect="non-scaling-stroke"/></g></g><g transform="translate(334.8,104.7) rotate(-22.6)"><g fill="none" stroke="rgba(50,80,240,0.2)" stroke-width="0.9" stroke-linecap="round" stroke-linejoin="round"><path transform="translate(-18.00,-4.50) scale(0.860)" d="M2.2 1 L2.2 6 Q2.2 9 0.5 10 M2.2 1 L8 1 L8 10 M0.5 6 L9.6 6 M4 3 L5.2 4.4" vector-effect="non-scaling-stroke"/><path transform="translate(-8.80,-4.50) scale(0.860)" d="M1 2 L9 2 M5 0 L2 5.6 L8.6 5.6 M5 3.6 L5 9.4 Q5 10 4 10 M3 7 L1.4 9.2 M7 7 L9 9.2" vector-effect="non-scaling-stroke"/><path transform="translate(0.40,-4.50) scale(0.860)" d="M0.6 0.8 L1.6 1.8 M0.2 3.8 L1.6 4.8 M0.4 9.6 L2 6.6 M4.6 0.4 L3.6 2.4 M3.8 2 L9 2 M6.6 0 L6.6 4 M3 4 L9.6 4 M4 6 h5.2 v4 h-5.2 Z" vector-effect="non-scaling-stroke"/><path transform="translate(9.60,-4.50) scale(0.860)" d="M2 1 L8 1 M0.4 4 L9.6 4 M4 4 Q4 8.6 0.8 10 M6 4 L6 9 Q6 10 7 10 L9.6 10 L9.6 8.4" vector-effect="non-scaling-stroke"/></g></g><g transform="translate(410.0,73.4) rotate(-22.6)"><g fill="none" stroke="rgba(50,80,240,0.2)" stroke-width="0.9" stroke-linecap="round" stroke-linejoin="round"><path transform="translate(-18.00,-4.50) scale(0.860)" d="M2.2 1 L2.2 6 Q2.2 9 0.5 10 M2.2 1 L8 1 L8 10 M0.5 6 L9.6 6 M4 3 L5.2 4.4" vector-effect="non-scaling-stroke"/><path transform="translate(-8.80,-4.50) scale(0.860)" d="M1 2 L9 2 M5 0 L2 5.6 L8.6 5.6 M5 3.6 L5 9.4 Q5 10 4 10 M3 7 L1.4 9.2 M7 7 L9 9.2" vector-effect="non-scaling-stroke"/><path transform="translate(0.40,-4.50) scale(0.860)" d="M0.6 0.8 L1.6 1.8 M0.2 3.8 L1.6 4.8 M0.4 9.6 L2 6.6 M4.6 0.4 L3.6 2.4 M3.8 2 L9 2 M6.6 0 L6.6 4 M3 4 L9.6 4 M4 6 h5.2 v4 h-5.2 Z" vector-effect="non-scaling-stroke"/><path transform="translate(9.60,-4.50) scale(0.860)" d="M2 1 L8 1 M0.4 4 L9.6 4 M4 4 Q4 8.6 0.8 10 M6 4 L6 9 Q6 10 7 10 L9.6 10 L9.6 8.4" vector-effect="non-scaling-stroke"/></g></g><g transform="translate(485.2,42.1) rotate(-22.6)"><g fill="none" stroke="rgba(90,100,190,0.18)" stroke-width="0.9" stroke-linecap="round" stroke-linejoin="round"><path transform="translate(-18.00,-4.50) scale(0.860)" d="M2.2 1 L2.2 6 Q2.2 9 0.5 10 M2.2 1 L8 1 L8 10 M0.5 6 L9.6 6 M4 3 L5.2 4.4" vector-effect="non-scaling-stroke"/><path transform="translate(-8.80,-4.50) scale(0.860)" d="M1 2 L9 2 M5 0 L2 5.6 L8.6 5.6 M5 3.6 L5 9.4 Q5 10 4 10 M3 7 L1.4 9.2 M7 7 L9 9.2" vector-effect="non-scaling-stroke"/><path transform="translate(0.40,-4.50) scale(0.860)" d="M0.6 0.8 L1.6 1.8 M0.2 3.8 L1.6 4.8 M0.4 9.6 L2 6.6 M4.6 0.4 L3.6 2.4 M3.8 2 L9 2 M6.6 0 L6.6 4 M3 4 L9.6 4 M4 6 h5.2 v4 h-5.2 Z" vector-effect="non-scaling-stroke"/><path transform="translate(9.60,-4.50) scale(0.860)" d="M2 1 L8 1 M0.4 4 L9.6 4 M4 4 Q4 8.6 0.8 10 M6 4 L6 9 Q6 10 7 10 L9.6 10 L9.6 8.4" vector-effect="non-scaling-stroke"/></g></g><g transform="translate(560.4,10.8) rotate(-22.6)"><g fill="none" stroke="rgba(90,100,190,0.18)" stroke-width="0.9" stroke-linecap="round" stroke-linejoin="round"><path transform="translate(-18.00,-4.50) scale(0.860)" d="M2.2 1 L2.2 6 Q2.2 9 0.5 10 M2.2 1 L8 1 L8 10 M0.5 6 L9.6 6 M4 3 L5.2 4.4" vector-effect="non-scaling-stroke"/><path transform="translate(-8.80,-4.50) scale(0.860)" d="M1 2 L9 2 M5 0 L2 5.6 L8.6 5.6 M5 3.6 L5 9.4 Q5 10 4 10 M3 7 L1.4 9.2 M7 7 L9 9.2" vector-effect="non-scaling-stroke"/><path transform="translate(0.40,-4.50) scale(0.860)" d="M0.6 0.8 L1.6 1.8 M0.2 3.8 L1.6 4.8 M0.4 9.6 L2 6.6 M4.6 0.4 L3.6 2.4 M3.8 2 L9 2 M6.6 0 L6.6 4 M3 4 L9.6 4 M4 6 h5.2 v4 h-5.2 Z" vector-effect="non-scaling-stroke"/><path transform="translate(9.60,-4.50) scale(0.860)" d="M2 1 L8 1 M0.4 4 L9.6 4 M4 4 Q4 8.6 0.8 10 M6 4 L6 9 Q6 10 7 10 L9.6 10 L9.6 8.4" vector-effect="non-scaling-stroke"/></g></g><g transform="translate(-5.3,339.2) rotate(-22.6)"><g fill="none" stroke="rgba(90,100,190,0.18)" stroke-width="0.9" stroke-linecap="round" stroke-linejoin="round"><path transform="translate(-18.00,-4.50) scale(0.860)" d="M2.2 1 L2.2 6 Q2.2 9 0.5 10 M2.2 1 L8 1 L8 10 M0.5 6 L9.6 6 M4 3 L5.2 4.4" vector-effect="non-scaling-stroke"/><path transform="translate(-8.80,-4.50) scale(0.860)" d="M1 2 L9 2 M5 0 L2 5.6 L8.6 5.6 M5 3.6 L5 9.4 Q5 10 4 10 M3 7 L1.4 9.2 M7 7 L9 9.2" vector-effect="non-scaling-stroke"/><path transform="translate(0.40,-4.50) scale(0.860)" d="M0.6 0.8 L1.6 1.8 M0.2 3.8 L1.6 4.8 M0.4 9.6 L2 6.6 M4.6 0.4 L3.6 2.4 M3.8 2 L9 2 M6.6 0 L6.6 4 M3 4 L9.6 4 M4 6 h5.2 v4 h-5.2 Z" vector-effect="non-scaling-stroke"/><path transform="translate(9.60,-4.50) scale(0.860)" d="M2 1 L8 1 M0.4 4 L9.6 4 M4 4 Q4 8.6 0.8 10 M6 4 L6 9 Q6 10 7 10 L9.6 10 L9.6 8.4" vector-effect="non-scaling-stroke"/></g></g><g transform="translate(69.9,307.9) rotate(-22.6)"><g fill="none" stroke="rgba(50,80,240,0.2)" stroke-width="0.9" stroke-linecap="round" stroke-linejoin="round"><path transform="translate(-18.00,-4.50) scale(0.860)" d="M2.2 1 L2.2 6 Q2.2 9 0.5 10 M2.2 1 L8 1 L8 10 M0.5 6 L9.6 6 M4 3 L5.2 4.4" vector-effect="non-scaling-stroke"/><path transform="translate(-8.80,-4.50) scale(0.860)" d="M1 2 L9 2 M5 0 L2 5.6 L8.6 5.6 M5 3.6 L5 9.4 Q5 10 4 10 M3 7 L1.4 9.2 M7 7 L9 9.2" vector-effect="non-scaling-stroke"/><path transform="translate(0.40,-4.50) scale(0.860)" d="M0.6 0.8 L1.6 1.8 M0.2 3.8 L1.6 4.8 M0.4 9.6 L2 6.6 M4.6 0.4 L3.6 2.4 M3.8 2 L9 2 M6.6 0 L6.6 4 M3 4 L9.6 4 M4 6 h5.2 v4 h-5.2 Z" vector-effect="non-scaling-stroke"/><path transform="translate(9.60,-4.50) scale(0.860)" d="M2 1 L8 1 M0.4 4 L9.6 4 M4 4 Q4 8.6 0.8 10 M6 4 L6 9 Q6 10 7 10 L9.6 10 L9.6 8.4" vector-effect="non-scaling-stroke"/></g></g><g transform="translate(145.1,276.6) rotate(-22.6)"><g fill="none" stroke="rgba(50,80,240,0.2)" stroke-width="0.9" stroke-linecap="round" stroke-linejoin="round"><path transform="translate(-18.00,-4.50) scale(0.860)" d="M2.2 1 L2.2 6 Q2.2 9 0.5 10 M2.2 1 L8 1 L8 10 M0.5 6 L9.6 6 M4 3 L5.2 4.4" vector-effect="non-scaling-stroke"/><path transform="translate(-8.80,-4.50) scale(0.860)" d="M1 2 L9 2 M5 0 L2 5.6 L8.6 5.6 M5 3.6 L5 9.4 Q5 10 4 10 M3 7 L1.4 9.2 M7 7 L9 9.2" vector-effect="non-scaling-stroke"/><path transform="translate(0.40,-4.50) scale(0.860)" d="M0.6 0.8 L1.6 1.8 M0.2 3.8 L1.6 4.8 M0.4 9.6 L2 6.6 M4.6 0.4 L3.6 2.4 M3.8 2 L9 2 M6.6 0 L6.6 4 M3 4 L9.6 4 M4 6 h5.2 v4 h-5.2 Z" vector-effect="non-scaling-stroke"/><path transform="translate(9.60,-4.50) scale(0.860)" d="M2 1 L8 1 M0.4 4 L9.6 4 M4 4 Q4 8.6 0.8 10 M6 4 L6 9 Q6 10 7 10 L9.6 10 L9.6 8.4" vector-effect="non-scaling-stroke"/></g></g><g transform="translate(220.3,245.3) rotate(-22.6)"><g fill="none" stroke="rgba(50,80,240,0.2)" stroke-width="0.9" stroke-linecap="round" stroke-linejoin="round"><path transform="translate(-18.00,-4.50) scale(0.860)" d="M2.2 1 L2.2 6 Q2.2 9 0.5 10 M2.2 1 L8 1 L8 10 M0.5 6 L9.6 6 M4 3 L5.2 4.4" vector-effect="non-scaling-stroke"/><path transform="translate(-8.80,-4.50) scale(0.860)" d="M1 2 L9 2 M5 0 L2 5.6 L8.6 5.6 M5 3.6 L5 9.4 Q5 10 4 10 M3 7 L1.4 9.2 M7 7 L9 9.2" vector-effect="non-scaling-stroke"/><path transform="translate(0.40,-4.50) scale(0.860)" d="M0.6 0.8 L1.6 1.8 M0.2 3.8 L1.6 4.8 M0.4 9.6 L2 6.6 M4.6 0.4 L3.6 2.4 M3.8 2 L9 2 M6.6 0 L6.6 4 M3 4 L9.6 4 M4 6 h5.2 v4 h-5.2 Z" vector-effect="non-scaling-stroke"/><path transform="translate(9.60,-4.50) scale(0.860)" d="M2 1 L8 1 M0.4 4 L9.6 4 M4 4 Q4 8.6 0.8 10 M6 4 L6 9 Q6 10 7 10 L9.6 10 L9.6 8.4" vector-effect="non-scaling-stroke"/></g></g><g transform="translate(295.5,214.0) rotate(-22.6)"><g fill="none" stroke="rgba(50,80,240,0.2)" stroke-width="0.9" stroke-linecap="round" stroke-linejoin="round"><path transform="translate(-18.00,-4.50) scale(0.860)" d="M2.2 1 L2.2 6 Q2.2 9 0.5 10 M2.2 1 L8 1 L8 10 M0.5 6 L9.6 6 M4 3 L5.2 4.4" vector-effect="non-scaling-stroke"/><path transform="translate(-8.80,-4.50) scale(0.860)" d="M1 2 L9 2 M5 0 L2 5.6 L8.6 5.6 M5 3.6 L5 9.4 Q5 10 4 10 M3 7 L1.4 9.2 M7 7 L9 9.2" vector-effect="non-scaling-stroke"/><path transform="translate(0.40,-4.50) scale(0.860)" d="M0.6 0.8 L1.6 1.8 M0.2 3.8 L1.6 4.8 M0.4 9.6 L2 6.6 M4.6 0.4 L3.6 2.4 M3.8 2 L9 2 M6.6 0 L6.6 4 M3 4 L9.6 4 M4 6 h5.2 v4 h-5.2 Z" vector-effect="non-scaling-stroke"/><path transform="translate(9.60,-4.50) scale(0.860)" d="M2 1 L8 1 M0.4 4 L9.6 4 M4 4 Q4 8.6 0.8 10 M6 4 L6 9 Q6 10 7 10 L9.6 10 L9.6 8.4" vector-effect="non-scaling-stroke"/></g></g><g transform="translate(370.7,182.7) rotate(-22.6)"><g fill="none" stroke="rgba(50,80,240,0.2)" stroke-width="0.9" stroke-linecap="round" stroke-linejoin="round"><path transform="translate(-18.00,-4.50) scale(0.860)" d="M2.2 1 L2.2 6 Q2.2 9 0.5 10 M2.2 1 L8 1 L8 10 M0.5 6 L9.6 6 M4 3 L5.2 4.4" vector-effect="non-scaling-stroke"/><path transform="translate(-8.80,-4.50) scale(0.860)" d="M1 2 L9 2 M5 0 L2 5.6 L8.6 5.6 M5 3.6 L5 9.4 Q5 10 4 10 M3 7 L1.4 9.2 M7 7 L9 9.2" vector-effect="non-scaling-stroke"/><path transform="translate(0.40,-4.50) scale(0.860)" d="M0.6 0.8 L1.6 1.8 M0.2 3.8 L1.6 4.8 M0.4 9.6 L2 6.6 M4.6 0.4 L3.6 2.4 M3.8 2 L9 2 M6.6 0 L6.6 4 M3 4 L9.6 4 M4 6 h5.2 v4 h-5.2 Z" vector-effect="non-scaling-stroke"/><path transform="translate(9.60,-4.50) scale(0.860)" d="M2 1 L8 1 M0.4 4 L9.6 4 M4 4 Q4 8.6 0.8 10 M6 4 L6 9 Q6 10 7 10 L9.6 10 L9.6 8.4" vector-effect="non-scaling-stroke"/></g></g><g transform="translate(445.9,151.4) rotate(-22.6)"><g fill="none" stroke="rgba(50,80,240,0.2)" stroke-width="0.9" stroke-linecap="round" stroke-linejoin="round"><path transform="translate(-18.00,-4.50) scale(0.860)" d="M2.2 1 L2.2 6 Q2.2 9 0.5 10 M2.2 1 L8 1 L8 10 M0.5 6 L9.6 6 M4 3 L5.2 4.4" vector-effect="non-scaling-stroke"/><path transform="translate(-8.80,-4.50) scale(0.860)" d="M1 2 L9 2 M5 0 L2 5.6 L8.6 5.6 M5 3.6 L5 9.4 Q5 10 4 10 M3 7 L1.4 9.2 M7 7 L9 9.2" vector-effect="non-scaling-stroke"/><path transform="translate(0.40,-4.50) scale(0.860)" d="M0.6 0.8 L1.6 1.8 M0.2 3.8 L1.6 4.8 M0.4 9.6 L2 6.6 M4.6 0.4 L3.6 2.4 M3.8 2 L9 2 M6.6 0 L6.6 4 M3 4 L9.6 4 M4 6 h5.2 v4 h-5.2 Z" vector-effect="non-scaling-stroke"/><path transform="translate(9.60,-4.50) scale(0.860)" d="M2 1 L8 1 M0.4 4 L9.6 4 M4 4 Q4 8.6 0.8 10 M6 4 L6 9 Q6 10 7 10 L9.6 10 L9.6 8.4" vector-effect="non-scaling-stroke"/></g></g><g transform="translate(521.1,120.1) rotate(-22.6)"><g fill="none" stroke="rgba(90,100,190,0.18)" stroke-width="0.9" stroke-linecap="round" stroke-linejoin="round"><path transform="translate(-18.00,-4.50) scale(0.860)" d="M2.2 1 L2.2 6 Q2.2 9 0.5 10 M2.2 1 L8 1 L8 10 M0.5 6 L9.6 6 M4 3 L5.2 4.4" vector-effect="non-scaling-stroke"/><path transform="translate(-8.80,-4.50) scale(0.860)" d="M1 2 L9 2 M5 0 L2 5.6 L8.6 5.6 M5 3.6 L5 9.4 Q5 10 4 10 M3 7 L1.4 9.2 M7 7 L9 9.2" vector-effect="non-scaling-stroke"/><path transform="translate(0.40,-4.50) scale(0.860)" d="M0.6 0.8 L1.6 1.8 M0.2 3.8 L1.6 4.8 M0.4 9.6 L2 6.6 M4.6 0.4 L3.6 2.4 M3.8 2 L9 2 M6.6 0 L6.6 4 M3 4 L9.6 4 M4 6 h5.2 v4 h-5.2 Z" vector-effect="non-scaling-stroke"/><path transform="translate(9.60,-4.50) scale(0.860)" d="M2 1 L8 1 M0.4 4 L9.6 4 M4 4 Q4 8.6 0.8 10 M6 4 L6 9 Q6 10 7 10 L9.6 10 L9.6 8.4" vector-effect="non-scaling-stroke"/></g></g><g transform="translate(596.3,88.8) rotate(-22.6)"><g fill="none" stroke="rgba(90,100,190,0.18)" stroke-width="0.9" stroke-linecap="round" stroke-linejoin="round"><path transform="translate(-18.00,-4.50) scale(0.860)" d="M2.2 1 L2.2 6 Q2.2 9 0.5 10 M2.2 1 L8 1 L8 10 M0.5 6 L9.6 6 M4 3 L5.2 4.4" vector-effect="non-scaling-stroke"/><path transform="translate(-8.80,-4.50) scale(0.860)" d="M1 2 L9 2 M5 0 L2 5.6 L8.6 5.6 M5 3.6 L5 9.4 Q5 10 4 10 M3 7 L1.4 9.2 M7 7 L9 9.2" vector-effect="non-scaling-stroke"/><path transform="translate(0.40,-4.50) scale(0.860)" d="M0.6 0.8 L1.6 1.8 M0.2 3.8 L1.6 4.8 M0.4 9.6 L2 6.6 M4.6 0.4 L3.6 2.4 M3.8 2 L9 2 M6.6 0 L6.6 4 M3 4 L9.6 4 M4 6 h5.2 v4 h-5.2 Z" vector-effect="non-scaling-stroke"/><path transform="translate(9.60,-4.50) scale(0.860)" d="M2 1 L8 1 M0.4 4 L9.6 4 M4 4 Q4 8.6 0.8 10 M6 4 L6 9 Q6 10 7 10 L9.6 10 L9.6 8.4" vector-effect="non-scaling-stroke"/></g></g><g transform="translate(671.5,57.5) rotate(-22.6)"><g fill="none" stroke="rgba(90,100,190,0.18)" stroke-width="0.9" stroke-linecap="round" stroke-linejoin="round"><path transform="translate(-18.00,-4.50) scale(0.860)" d="M2.2 1 L2.2 6 Q2.2 9 0.5 10 M2.2 1 L8 1 L8 10 M0.5 6 L9.6 6 M4 3 L5.2 4.4" vector-effect="non-scaling-stroke"/><path transform="translate(-8.80,-4.50) scale(0.860)" d="M1 2 L9 2 M5 0 L2 5.6 L8.6 5.6 M5 3.6 L5 9.4 Q5 10 4 10 M3 7 L1.4 9.2 M7 7 L9 9.2" vector-effect="non-scaling-stroke"/><path transform="translate(0.40,-4.50) scale(0.860)" d="M0.6 0.8 L1.6 1.8 M0.2 3.8 L1.6 4.8 M0.4 9.6 L2 6.6 M4.6 0.4 L3.6 2.4 M3.8 2 L9 2 M6.6 0 L6.6 4 M3 4 L9.6 4 M4 6 h5.2 v4 h-5.2 Z" vector-effect="non-scaling-stroke"/><path transform="translate(9.60,-4.50) scale(0.860)" d="M2 1 L8 1 M0.4 4 L9.6 4 M4 4 Q4 8.6 0.8 10 M6 4 L6 9 Q6 10 7 10 L9.6 10 L9.6 8.4" vector-effect="non-scaling-stroke"/></g></g><g transform="translate(746.7,26.2) rotate(-22.6)"><g fill="none" stroke="rgba(90,100,190,0.18)" stroke-width="0.9" stroke-linecap="round" stroke-linejoin="round"><path transform="translate(-18.00,-4.50) scale(0.860)" d="M2.2 1 L2.2 6 Q2.2 9 0.5 10 M2.2 1 L8 1 L8 10 M0.5 6 L9.6 6 M4 3 L5.2 4.4" vector-effect="non-scaling-stroke"/><path transform="translate(-8.80,-4.50) scale(0.860)" d="M1 2 L9 2 M5 0 L2 5.6 L8.6 5.6 M5 3.6 L5 9.4 Q5 10 4 10 M3 7 L1.4 9.2 M7 7 L9 9.2" vector-effect="non-scaling-stroke"/><path transform="translate(0.40,-4.50) scale(0.860)" d="M0.6 0.8 L1.6 1.8 M0.2 3.8 L1.6 4.8 M0.4 9.6 L2 6.6 M4.6 0.4 L3.6 2.4 M3.8 2 L9 2 M6.6 0 L6.6 4 M3 4 L9.6 4 M4 6 h5.2 v4 h-5.2 Z" vector-effect="non-scaling-stroke"/><path transform="translate(9.60,-4.50) scale(0.860)" d="M2 1 L8 1 M0.4 4 L9.6 4 M4 4 Q4 8.6 0.8 10 M6 4 L6 9 Q6 10 7 10 L9.6 10 L9.6 8.4" vector-effect="non-scaling-stroke"/></g></g><g transform="translate(821.9,-5.1) rotate(-22.6)"><g fill="none" stroke="rgba(90,100,190,0.18)" stroke-width="0.9" stroke-linecap="round" stroke-linejoin="round"><path transform="translate(-18.00,-4.50) scale(0.860)" d="M2.2 1 L2.2 6 Q2.2 9 0.5 10 M2.2 1 L8 1 L8 10 M0.5 6 L9.6 6 M4 3 L5.2 4.4" vector-effect="non-scaling-stroke"/><path transform="translate(-8.80,-4.50) scale(0.860)" d="M1 2 L9 2 M5 0 L2 5.6 L8.6 5.6 M5 3.6 L5 9.4 Q5 10 4 10 M3 7 L1.4 9.2 M7 7 L9 9.2" vector-effect="non-scaling-stroke"/><path transform="translate(0.40,-4.50) scale(0.860)" d="M0.6 0.8 L1.6 1.8 M0.2 3.8 L1.6 4.8 M0.4 9.6 L2 6.6 M4.6 0.4 L3.6 2.4 M3.8 2 L9 2 M6.6 0 L6.6 4 M3 4 L9.6 4 M4 6 h5.2 v4 h-5.2 Z" vector-effect="non-scaling-stroke"/><path transform="translate(9.60,-4.50) scale(0.860)" d="M2 1 L8 1 M0.4 4 L9.6 4 M4 4 Q4 8.6 0.8 10 M6 4 L6 9 Q6 10 7 10 L9.6 10 L9.6 8.4" vector-effect="non-scaling-stroke"/></g></g><g transform="translate(22.9,404.5) rotate(-22.6)"><g fill="none" stroke="rgba(90,100,190,0.18)" stroke-width="0.9" stroke-linecap="round" stroke-linejoin="round"><path transform="translate(-18.00,-4.50) scale(0.860)" d="M2.2 1 L2.2 6 Q2.2 9 0.5 10 M2.2 1 L8 1 L8 10 M0.5 6 L9.6 6 M4 3 L5.2 4.4" vector-effect="non-scaling-stroke"/><path transform="translate(-8.80,-4.50) scale(0.860)" d="M1 2 L9 2 M5 0 L2 5.6 L8.6 5.6 M5 3.6 L5 9.4 Q5 10 4 10 M3 7 L1.4 9.2 M7 7 L9 9.2" vector-effect="non-scaling-stroke"/><path transform="translate(0.40,-4.50) scale(0.860)" d="M0.6 0.8 L1.6 1.8 M0.2 3.8 L1.6 4.8 M0.4 9.6 L2 6.6 M4.6 0.4 L3.6 2.4 M3.8 2 L9 2 M6.6 0 L6.6 4 M3 4 L9.6 4 M4 6 h5.2 v4 h-5.2 Z" vector-effect="non-scaling-stroke"/><path transform="translate(9.60,-4.50) scale(0.860)" d="M2 1 L8 1 M0.4 4 L9.6 4 M4 4 Q4 8.6 0.8 10 M6 4 L6 9 Q6 10 7 10 L9.6 10 L9.6 8.4" vector-effect="non-scaling-stroke"/></g></g><g transform="translate(98.1,373.2) rotate(-22.6)"><g fill="none" stroke="rgba(90,100,190,0.18)" stroke-width="0.9" stroke-linecap="round" stroke-linejoin="round"><path transform="translate(-18.00,-4.50) scale(0.860)" d="M2.2 1 L2.2 6 Q2.2 9 0.5 10 M2.2 1 L8 1 L8 10 M0.5 6 L9.6 6 M4 3 L5.2 4.4" vector-effect="non-scaling-stroke"/><path transform="translate(-8.80,-4.50) scale(0.860)" d="M1 2 L9 2 M5 0 L2 5.6 L8.6 5.6 M5 3.6 L5 9.4 Q5 10 4 10 M3 7 L1.4 9.2 M7 7 L9 9.2" vector-effect="non-scaling-stroke"/><path transform="translate(0.40,-4.50) scale(0.860)" d="M0.6 0.8 L1.6 1.8 M0.2 3.8 L1.6 4.8 M0.4 9.6 L2 6.6 M4.6 0.4 L3.6 2.4 M3.8 2 L9 2 M6.6 0 L6.6 4 M3 4 L9.6 4 M4 6 h5.2 v4 h-5.2 Z" vector-effect="non-scaling-stroke"/><path transform="translate(9.60,-4.50) scale(0.860)" d="M2 1 L8 1 M0.4 4 L9.6 4 M4 4 Q4 8.6 0.8 10 M6 4 L6 9 Q6 10 7 10 L9.6 10 L9.6 8.4" vector-effect="non-scaling-stroke"/></g></g><g transform="translate(173.3,341.9) rotate(-22.6)"><g fill="none" stroke="rgba(90,100,190,0.18)" stroke-width="0.9" stroke-linecap="round" stroke-linejoin="round"><path transform="translate(-18.00,-4.50) scale(0.860)" d="M2.2 1 L2.2 6 Q2.2 9 0.5 10 M2.2 1 L8 1 L8 10 M0.5 6 L9.6 6 M4 3 L5.2 4.4" vector-effect="non-scaling-stroke"/><path transform="translate(-8.80,-4.50) scale(0.860)" d="M1 2 L9 2 M5 0 L2 5.6 L8.6 5.6 M5 3.6 L5 9.4 Q5 10 4 10 M3 7 L1.4 9.2 M7 7 L9 9.2" vector-effect="non-scaling-stroke"/><path transform="translate(0.40,-4.50) scale(0.860)" d="M0.6 0.8 L1.6 1.8 M0.2 3.8 L1.6 4.8 M0.4 9.6 L2 6.6 M4.6 0.4 L3.6 2.4 M3.8 2 L9 2 M6.6 0 L6.6 4 M3 4 L9.6 4 M4 6 h5.2 v4 h-5.2 Z" vector-effect="non-scaling-stroke"/><path transform="translate(9.60,-4.50) scale(0.860)" d="M2 1 L8 1 M0.4 4 L9.6 4 M4 4 Q4 8.6 0.8 10 M6 4 L6 9 Q6 10 7 10 L9.6 10 L9.6 8.4" vector-effect="non-scaling-stroke"/></g></g><g transform="translate(248.5,310.6) rotate(-22.6)"><g fill="none" stroke="rgba(50,80,240,0.2)" stroke-width="0.9" stroke-linecap="round" stroke-linejoin="round"><path transform="translate(-18.00,-4.50) scale(0.860)" d="M2.2 1 L2.2 6 Q2.2 9 0.5 10 M2.2 1 L8 1 L8 10 M0.5 6 L9.6 6 M4 3 L5.2 4.4" vector-effect="non-scaling-stroke"/><path transform="translate(-8.80,-4.50) scale(0.860)" d="M1 2 L9 2 M5 0 L2 5.6 L8.6 5.6 M5 3.6 L5 9.4 Q5 10 4 10 M3 7 L1.4 9.2 M7 7 L9 9.2" vector-effect="non-scaling-stroke"/><path transform="translate(0.40,-4.50) scale(0.860)" d="M0.6 0.8 L1.6 1.8 M0.2 3.8 L1.6 4.8 M0.4 9.6 L2 6.6 M4.6 0.4 L3.6 2.4 M3.8 2 L9 2 M6.6 0 L6.6 4 M3 4 L9.6 4 M4 6 h5.2 v4 h-5.2 Z" vector-effect="non-scaling-stroke"/><path transform="translate(9.60,-4.50) scale(0.860)" d="M2 1 L8 1 M0.4 4 L9.6 4 M4 4 Q4 8.6 0.8 10 M6 4 L6 9 Q6 10 7 10 L9.6 10 L9.6 8.4" vector-effect="non-scaling-stroke"/></g></g><g transform="translate(323.7,279.3) rotate(-22.6)"><g fill="none" stroke="rgba(50,80,240,0.2)" stroke-width="0.9" stroke-linecap="round" stroke-linejoin="round"><path transform="translate(-18.00,-4.50) scale(0.860)" d="M2.2 1 L2.2 6 Q2.2 9 0.5 10 M2.2 1 L8 1 L8 10 M0.5 6 L9.6 6 M4 3 L5.2 4.4" vector-effect="non-scaling-stroke"/><path transform="translate(-8.80,-4.50) scale(0.860)" d="M1 2 L9 2 M5 0 L2 5.6 L8.6 5.6 M5 3.6 L5 9.4 Q5 10 4 10 M3 7 L1.4 9.2 M7 7 L9 9.2" vector-effect="non-scaling-stroke"/><path transform="translate(0.40,-4.50) scale(0.860)" d="M0.6 0.8 L1.6 1.8 M0.2 3.8 L1.6 4.8 M0.4 9.6 L2 6.6 M4.6 0.4 L3.6 2.4 M3.8 2 L9 2 M6.6 0 L6.6 4 M3 4 L9.6 4 M4 6 h5.2 v4 h-5.2 Z" vector-effect="non-scaling-stroke"/><path transform="translate(9.60,-4.50) scale(0.860)" d="M2 1 L8 1 M0.4 4 L9.6 4 M4 4 Q4 8.6 0.8 10 M6 4 L6 9 Q6 10 7 10 L9.6 10 L9.6 8.4" vector-effect="non-scaling-stroke"/></g></g><g transform="translate(398.9,248.0) rotate(-22.6)"><g fill="none" stroke="rgba(50,80,240,0.2)" stroke-width="0.9" stroke-linecap="round" stroke-linejoin="round"><path transform="translate(-18.00,-4.50) scale(0.860)" d="M2.2 1 L2.2 6 Q2.2 9 0.5 10 M2.2 1 L8 1 L8 10 M0.5 6 L9.6 6 M4 3 L5.2 4.4" vector-effect="non-scaling-stroke"/><path transform="translate(-8.80,-4.50) scale(0.860)" d="M1 2 L9 2 M5 0 L2 5.6 L8.6 5.6 M5 3.6 L5 9.4 Q5 10 4 10 M3 7 L1.4 9.2 M7 7 L9 9.2" vector-effect="non-scaling-stroke"/><path transform="translate(0.40,-4.50) scale(0.860)" d="M0.6 0.8 L1.6 1.8 M0.2 3.8 L1.6 4.8 M0.4 9.6 L2 6.6 M4.6 0.4 L3.6 2.4 M3.8 2 L9 2 M6.6 0 L6.6 4 M3 4 L9.6 4 M4 6 h5.2 v4 h-5.2 Z" vector-effect="non-scaling-stroke"/><path transform="translate(9.60,-4.50) scale(0.860)" d="M2 1 L8 1 M0.4 4 L9.6 4 M4 4 Q4 8.6 0.8 10 M6 4 L6 9 Q6 10 7 10 L9.6 10 L9.6 8.4" vector-effect="non-scaling-stroke"/></g></g><g transform="translate(474.1,216.7) rotate(-22.6)"><g fill="none" stroke="rgba(90,100,190,0.18)" stroke-width="0.9" stroke-linecap="round" stroke-linejoin="round"><path transform="translate(-18.00,-4.50) scale(0.860)" d="M2.2 1 L2.2 6 Q2.2 9 0.5 10 M2.2 1 L8 1 L8 10 M0.5 6 L9.6 6 M4 3 L5.2 4.4" vector-effect="non-scaling-stroke"/><path transform="translate(-8.80,-4.50) scale(0.860)" d="M1 2 L9 2 M5 0 L2 5.6 L8.6 5.6 M5 3.6 L5 9.4 Q5 10 4 10 M3 7 L1.4 9.2 M7 7 L9 9.2" vector-effect="non-scaling-stroke"/><path transform="translate(0.40,-4.50) scale(0.860)" d="M0.6 0.8 L1.6 1.8 M0.2 3.8 L1.6 4.8 M0.4 9.6 L2 6.6 M4.6 0.4 L3.6 2.4 M3.8 2 L9 2 M6.6 0 L6.6 4 M3 4 L9.6 4 M4 6 h5.2 v4 h-5.2 Z" vector-effect="non-scaling-stroke"/><path transform="translate(9.60,-4.50) scale(0.860)" d="M2 1 L8 1 M0.4 4 L9.6 4 M4 4 Q4 8.6 0.8 10 M6 4 L6 9 Q6 10 7 10 L9.6 10 L9.6 8.4" vector-effect="non-scaling-stroke"/></g></g><g transform="translate(549.3,185.4) rotate(-22.6)"><g fill="none" stroke="rgba(90,100,190,0.18)" stroke-width="0.9" stroke-linecap="round" stroke-linejoin="round"><path transform="translate(-18.00,-4.50) scale(0.860)" d="M2.2 1 L2.2 6 Q2.2 9 0.5 10 M2.2 1 L8 1 L8 10 M0.5 6 L9.6 6 M4 3 L5.2 4.4" vector-effect="non-scaling-stroke"/><path transform="translate(-8.80,-4.50) scale(0.860)" d="M1 2 L9 2 M5 0 L2 5.6 L8.6 5.6 M5 3.6 L5 9.4 Q5 10 4 10 M3 7 L1.4 9.2 M7 7 L9 9.2" vector-effect="non-scaling-stroke"/><path transform="translate(0.40,-4.50) scale(0.860)" d="M0.6 0.8 L1.6 1.8 M0.2 3.8 L1.6 4.8 M0.4 9.6 L2 6.6 M4.6 0.4 L3.6 2.4 M3.8 2 L9 2 M6.6 0 L6.6 4 M3 4 L9.6 4 M4 6 h5.2 v4 h-5.2 Z" vector-effect="non-scaling-stroke"/><path transform="translate(9.60,-4.50) scale(0.860)" d="M2 1 L8 1 M0.4 4 L9.6 4 M4 4 Q4 8.6 0.8 10 M6 4 L6 9 Q6 10 7 10 L9.6 10 L9.6 8.4" vector-effect="non-scaling-stroke"/></g></g><g transform="translate(624.5,154.1) rotate(-22.6)"><g fill="none" stroke="rgba(90,100,190,0.18)" stroke-width="0.9" stroke-linecap="round" stroke-linejoin="round"><path transform="translate(-18.00,-4.50) scale(0.860)" d="M2.2 1 L2.2 6 Q2.2 9 0.5 10 M2.2 1 L8 1 L8 10 M0.5 6 L9.6 6 M4 3 L5.2 4.4" vector-effect="non-scaling-stroke"/><path transform="translate(-8.80,-4.50) scale(0.860)" d="M1 2 L9 2 M5 0 L2 5.6 L8.6 5.6 M5 3.6 L5 9.4 Q5 10 4 10 M3 7 L1.4 9.2 M7 7 L9 9.2" vector-effect="non-scaling-stroke"/><path transform="translate(0.40,-4.50) scale(0.860)" d="M0.6 0.8 L1.6 1.8 M0.2 3.8 L1.6 4.8 M0.4 9.6 L2 6.6 M4.6 0.4 L3.6 2.4 M3.8 2 L9 2 M6.6 0 L6.6 4 M3 4 L9.6 4 M4 6 h5.2 v4 h-5.2 Z" vector-effect="non-scaling-stroke"/><path transform="translate(9.60,-4.50) scale(0.860)" d="M2 1 L8 1 M0.4 4 L9.6 4 M4 4 Q4 8.6 0.8 10 M6 4 L6 9 Q6 10 7 10 L9.6 10 L9.6 8.4" vector-effect="non-scaling-stroke"/></g></g><g transform="translate(699.7,122.8) rotate(-22.6)"><g fill="none" stroke="rgba(90,100,190,0.18)" stroke-width="0.9" stroke-linecap="round" stroke-linejoin="round"><path transform="translate(-18.00,-4.50) scale(0.860)" d="M2.2 1 L2.2 6 Q2.2 9 0.5 10 M2.2 1 L8 1 L8 10 M0.5 6 L9.6 6 M4 3 L5.2 4.4" vector-effect="non-scaling-stroke"/><path transform="translate(-8.80,-4.50) scale(0.860)" d="M1 2 L9 2 M5 0 L2 5.6 L8.6 5.6 M5 3.6 L5 9.4 Q5 10 4 10 M3 7 L1.4 9.2 M7 7 L9 9.2" vector-effect="non-scaling-stroke"/><path transform="translate(0.40,-4.50) scale(0.860)" d="M0.6 0.8 L1.6 1.8 M0.2 3.8 L1.6 4.8 M0.4 9.6 L2 6.6 M4.6 0.4 L3.6 2.4 M3.8 2 L9 2 M6.6 0 L6.6 4 M3 4 L9.6 4 M4 6 h5.2 v4 h-5.2 Z" vector-effect="non-scaling-stroke"/><path transform="translate(9.60,-4.50) scale(0.860)" d="M2 1 L8 1 M0.4 4 L9.6 4 M4 4 Q4 8.6 0.8 10 M6 4 L6 9 Q6 10 7 10 L9.6 10 L9.6 8.4" vector-effect="non-scaling-stroke"/></g></g><g transform="translate(774.9,91.5) rotate(-22.6)"><g fill="none" stroke="rgba(90,100,190,0.18)" stroke-width="0.9" stroke-linecap="round" stroke-linejoin="round"><path transform="translate(-18.00,-4.50) scale(0.860)" d="M2.2 1 L2.2 6 Q2.2 9 0.5 10 M2.2 1 L8 1 L8 10 M0.5 6 L9.6 6 M4 3 L5.2 4.4" vector-effect="non-scaling-stroke"/><path transform="translate(-8.80,-4.50) scale(0.860)" d="M1 2 L9 2 M5 0 L2 5.6 L8.6 5.6 M5 3.6 L5 9.4 Q5 10 4 10 M3 7 L1.4 9.2 M7 7 L9 9.2" vector-effect="non-scaling-stroke"/><path transform="translate(0.40,-4.50) scale(0.860)" d="M0.6 0.8 L1.6 1.8 M0.2 3.8 L1.6 4.8 M0.4 9.6 L2 6.6 M4.6 0.4 L3.6 2.4 M3.8 2 L9 2 M6.6 0 L6.6 4 M3 4 L9.6 4 M4 6 h5.2 v4 h-5.2 Z" vector-effect="non-scaling-stroke"/><path transform="translate(9.60,-4.50) scale(0.860)" d="M2 1 L8 1 M0.4 4 L9.6 4 M4 4 Q4 8.6 0.8 10 M6 4 L6 9 Q6 10 7 10 L9.6 10 L9.6 8.4" vector-effect="non-scaling-stroke"/></g></g><g transform="translate(-15.9,512.6) rotate(-22.6)"><g fill="none" stroke="rgba(90,100,190,0.18)" stroke-width="0.9" stroke-linecap="round" stroke-linejoin="round"><path transform="translate(-18.00,-4.50) scale(0.860)" d="M2.2 1 L2.2 6 Q2.2 9 0.5 10 M2.2 1 L8 1 L8 10 M0.5 6 L9.6 6 M4 3 L5.2 4.4" vector-effect="non-scaling-stroke"/><path transform="translate(-8.80,-4.50) scale(0.860)" d="M1 2 L9 2 M5 0 L2 5.6 L8.6 5.6 M5 3.6 L5 9.4 Q5 10 4 10 M3 7 L1.4 9.2 M7 7 L9 9.2" vector-effect="non-scaling-stroke"/><path transform="translate(0.40,-4.50) scale(0.860)" d="M0.6 0.8 L1.6 1.8 M0.2 3.8 L1.6 4.8 M0.4 9.6 L2 6.6 M4.6 0.4 L3.6 2.4 M3.8 2 L9 2 M6.6 0 L6.6 4 M3 4 L9.6 4 M4 6 h5.2 v4 h-5.2 Z" vector-effect="non-scaling-stroke"/><path transform="translate(9.60,-4.50) scale(0.860)" d="M2 1 L8 1 M0.4 4 L9.6 4 M4 4 Q4 8.6 0.8 10 M6 4 L6 9 Q6 10 7 10 L9.6 10 L9.6 8.4" vector-effect="non-scaling-stroke"/></g></g><g transform="translate(59.3,481.3) rotate(-22.6)"><g fill="none" stroke="rgba(90,100,190,0.18)" stroke-width="0.9" stroke-linecap="round" stroke-linejoin="round"><path transform="translate(-18.00,-4.50) scale(0.860)" d="M2.2 1 L2.2 6 Q2.2 9 0.5 10 M2.2 1 L8 1 L8 10 M0.5 6 L9.6 6 M4 3 L5.2 4.4" vector-effect="non-scaling-stroke"/><path transform="translate(-8.80,-4.50) scale(0.860)" d="M1 2 L9 2 M5 0 L2 5.6 L8.6 5.6 M5 3.6 L5 9.4 Q5 10 4 10 M3 7 L1.4 9.2 M7 7 L9 9.2" vector-effect="non-scaling-stroke"/><path transform="translate(0.40,-4.50) scale(0.860)" d="M0.6 0.8 L1.6 1.8 M0.2 3.8 L1.6 4.8 M0.4 9.6 L2 6.6 M4.6 0.4 L3.6 2.4 M3.8 2 L9 2 M6.6 0 L6.6 4 M3 4 L9.6 4 M4 6 h5.2 v4 h-5.2 Z" vector-effect="non-scaling-stroke"/><path transform="translate(9.60,-4.50) scale(0.860)" d="M2 1 L8 1 M0.4 4 L9.6 4 M4 4 Q4 8.6 0.8 10 M6 4 L6 9 Q6 10 7 10 L9.6 10 L9.6 8.4" vector-effect="non-scaling-stroke"/></g></g><g transform="translate(134.5,450.0) rotate(-22.6)"><g fill="none" stroke="rgba(90,100,190,0.18)" stroke-width="0.9" stroke-linecap="round" stroke-linejoin="round"><path transform="translate(-18.00,-4.50) scale(0.860)" d="M2.2 1 L2.2 6 Q2.2 9 0.5 10 M2.2 1 L8 1 L8 10 M0.5 6 L9.6 6 M4 3 L5.2 4.4" vector-effect="non-scaling-stroke"/><path transform="translate(-8.80,-4.50) scale(0.860)" d="M1 2 L9 2 M5 0 L2 5.6 L8.6 5.6 M5 3.6 L5 9.4 Q5 10 4 10 M3 7 L1.4 9.2 M7 7 L9 9.2" vector-effect="non-scaling-stroke"/><path transform="translate(0.40,-4.50) scale(0.860)" d="M0.6 0.8 L1.6 1.8 M0.2 3.8 L1.6 4.8 M0.4 9.6 L2 6.6 M4.6 0.4 L3.6 2.4 M3.8 2 L9 2 M6.6 0 L6.6 4 M3 4 L9.6 4 M4 6 h5.2 v4 h-5.2 Z" vector-effect="non-scaling-stroke"/><path transform="translate(9.60,-4.50) scale(0.860)" d="M2 1 L8 1 M0.4 4 L9.6 4 M4 4 Q4 8.6 0.8 10 M6 4 L6 9 Q6 10 7 10 L9.6 10 L9.6 8.4" vector-effect="non-scaling-stroke"/></g></g><g transform="translate(209.7,418.7) rotate(-22.6)"><g fill="none" stroke="rgba(90,100,190,0.18)" stroke-width="0.9" stroke-linecap="round" stroke-linejoin="round"><path transform="translate(-18.00,-4.50) scale(0.860)" d="M2.2 1 L2.2 6 Q2.2 9 0.5 10 M2.2 1 L8 1 L8 10 M0.5 6 L9.6 6 M4 3 L5.2 4.4" vector-effect="non-scaling-stroke"/><path transform="translate(-8.80,-4.50) scale(0.860)" d="M1 2 L9 2 M5 0 L2 5.6 L8.6 5.6 M5 3.6 L5 9.4 Q5 10 4 10 M3 7 L1.4 9.2 M7 7 L9 9.2" vector-effect="non-scaling-stroke"/><path transform="translate(0.40,-4.50) scale(0.860)" d="M0.6 0.8 L1.6 1.8 M0.2 3.8 L1.6 4.8 M0.4 9.6 L2 6.6 M4.6 0.4 L3.6 2.4 M3.8 2 L9 2 M6.6 0 L6.6 4 M3 4 L9.6 4 M4 6 h5.2 v4 h-5.2 Z" vector-effect="non-scaling-stroke"/><path transform="translate(9.60,-4.50) scale(0.860)" d="M2 1 L8 1 M0.4 4 L9.6 4 M4 4 Q4 8.6 0.8 10 M6 4 L6 9 Q6 10 7 10 L9.6 10 L9.6 8.4" vector-effect="non-scaling-stroke"/></g></g><g transform="translate(284.9,387.4) rotate(-22.6)"><g fill="none" stroke="rgba(90,100,190,0.18)" stroke-width="0.9" stroke-linecap="round" stroke-linejoin="round"><path transform="translate(-18.00,-4.50) scale(0.860)" d="M2.2 1 L2.2 6 Q2.2 9 0.5 10 M2.2 1 L8 1 L8 10 M0.5 6 L9.6 6 M4 3 L5.2 4.4" vector-effect="non-scaling-stroke"/><path transform="translate(-8.80,-4.50) scale(0.860)" d="M1 2 L9 2 M5 0 L2 5.6 L8.6 5.6 M5 3.6 L5 9.4 Q5 10 4 10 M3 7 L1.4 9.2 M7 7 L9 9.2" vector-effect="non-scaling-stroke"/><path transform="translate(0.40,-4.50) scale(0.860)" d="M0.6 0.8 L1.6 1.8 M0.2 3.8 L1.6 4.8 M0.4 9.6 L2 6.6 M4.6 0.4 L3.6 2.4 M3.8 2 L9 2 M6.6 0 L6.6 4 M3 4 L9.6 4 M4 6 h5.2 v4 h-5.2 Z" vector-effect="non-scaling-stroke"/><path transform="translate(9.60,-4.50) scale(0.860)" d="M2 1 L8 1 M0.4 4 L9.6 4 M4 4 Q4 8.6 0.8 10 M6 4 L6 9 Q6 10 7 10 L9.6 10 L9.6 8.4" vector-effect="non-scaling-stroke"/></g></g><g transform="translate(360.1,356.1) rotate(-22.6)"><g fill="none" stroke="rgba(90,100,190,0.18)" stroke-width="0.9" stroke-linecap="round" stroke-linejoin="round"><path transform="translate(-18.00,-4.50) scale(0.860)" d="M2.2 1 L2.2 6 Q2.2 9 0.5 10 M2.2 1 L8 1 L8 10 M0.5 6 L9.6 6 M4 3 L5.2 4.4" vector-effect="non-scaling-stroke"/><path transform="translate(-8.80,-4.50) scale(0.860)" d="M1 2 L9 2 M5 0 L2 5.6 L8.6 5.6 M5 3.6 L5 9.4 Q5 10 4 10 M3 7 L1.4 9.2 M7 7 L9 9.2" vector-effect="non-scaling-stroke"/><path transform="translate(0.40,-4.50) scale(0.860)" d="M0.6 0.8 L1.6 1.8 M0.2 3.8 L1.6 4.8 M0.4 9.6 L2 6.6 M4.6 0.4 L3.6 2.4 M3.8 2 L9 2 M6.6 0 L6.6 4 M3 4 L9.6 4 M4 6 h5.2 v4 h-5.2 Z" vector-effect="non-scaling-stroke"/><path transform="translate(9.60,-4.50) scale(0.860)" d="M2 1 L8 1 M0.4 4 L9.6 4 M4 4 Q4 8.6 0.8 10 M6 4 L6 9 Q6 10 7 10 L9.6 10 L9.6 8.4" vector-effect="non-scaling-stroke"/></g></g><g transform="translate(435.3,324.8) rotate(-22.6)"><g fill="none" stroke="rgba(50,80,240,0.2)" stroke-width="0.9" stroke-linecap="round" stroke-linejoin="round"><path transform="translate(-18.00,-4.50) scale(0.860)" d="M2.2 1 L2.2 6 Q2.2 9 0.5 10 M2.2 1 L8 1 L8 10 M0.5 6 L9.6 6 M4 3 L5.2 4.4" vector-effect="non-scaling-stroke"/><path transform="translate(-8.80,-4.50) scale(0.860)" d="M1 2 L9 2 M5 0 L2 5.6 L8.6 5.6 M5 3.6 L5 9.4 Q5 10 4 10 M3 7 L1.4 9.2 M7 7 L9 9.2" vector-effect="non-scaling-stroke"/><path transform="translate(0.40,-4.50) scale(0.860)" d="M0.6 0.8 L1.6 1.8 M0.2 3.8 L1.6 4.8 M0.4 9.6 L2 6.6 M4.6 0.4 L3.6 2.4 M3.8 2 L9 2 M6.6 0 L6.6 4 M3 4 L9.6 4 M4 6 h5.2 v4 h-5.2 Z" vector-effect="non-scaling-stroke"/><path transform="translate(9.60,-4.50) scale(0.860)" d="M2 1 L8 1 M0.4 4 L9.6 4 M4 4 Q4 8.6 0.8 10 M6 4 L6 9 Q6 10 7 10 L9.6 10 L9.6 8.4" vector-effect="non-scaling-stroke"/></g></g><g transform="translate(510.5,293.5) rotate(-22.6)"><g fill="none" stroke="rgba(90,100,190,0.18)" stroke-width="0.9" stroke-linecap="round" stroke-linejoin="round"><path transform="translate(-18.00,-4.50) scale(0.860)" d="M2.2 1 L2.2 6 Q2.2 9 0.5 10 M2.2 1 L8 1 L8 10 M0.5 6 L9.6 6 M4 3 L5.2 4.4" vector-effect="non-scaling-stroke"/><path transform="translate(-8.80,-4.50) scale(0.860)" d="M1 2 L9 2 M5 0 L2 5.6 L8.6 5.6 M5 3.6 L5 9.4 Q5 10 4 10 M3 7 L1.4 9.2 M7 7 L9 9.2" vector-effect="non-scaling-stroke"/><path transform="translate(0.40,-4.50) scale(0.860)" d="M0.6 0.8 L1.6 1.8 M0.2 3.8 L1.6 4.8 M0.4 9.6 L2 6.6 M4.6 0.4 L3.6 2.4 M3.8 2 L9 2 M6.6 0 L6.6 4 M3 4 L9.6 4 M4 6 h5.2 v4 h-5.2 Z" vector-effect="non-scaling-stroke"/><path transform="translate(9.60,-4.50) scale(0.860)" d="M2 1 L8 1 M0.4 4 L9.6 4 M4 4 Q4 8.6 0.8 10 M6 4 L6 9 Q6 10 7 10 L9.6 10 L9.6 8.4" vector-effect="non-scaling-stroke"/></g></g><g transform="translate(585.7,262.2) rotate(-22.6)"><g fill="none" stroke="rgba(90,100,190,0.18)" stroke-width="0.9" stroke-linecap="round" stroke-linejoin="round"><path transform="translate(-18.00,-4.50) scale(0.860)" d="M2.2 1 L2.2 6 Q2.2 9 0.5 10 M2.2 1 L8 1 L8 10 M0.5 6 L9.6 6 M4 3 L5.2 4.4" vector-effect="non-scaling-stroke"/><path transform="translate(-8.80,-4.50) scale(0.860)" d="M1 2 L9 2 M5 0 L2 5.6 L8.6 5.6 M5 3.6 L5 9.4 Q5 10 4 10 M3 7 L1.4 9.2 M7 7 L9 9.2" vector-effect="non-scaling-stroke"/><path transform="translate(0.40,-4.50) scale(0.860)" d="M0.6 0.8 L1.6 1.8 M0.2 3.8 L1.6 4.8 M0.4 9.6 L2 6.6 M4.6 0.4 L3.6 2.4 M3.8 2 L9 2 M6.6 0 L6.6 4 M3 4 L9.6 4 M4 6 h5.2 v4 h-5.2 Z" vector-effect="non-scaling-stroke"/><path transform="translate(9.60,-4.50) scale(0.860)" d="M2 1 L8 1 M0.4 4 L9.6 4 M4 4 Q4 8.6 0.8 10 M6 4 L6 9 Q6 10 7 10 L9.6 10 L9.6 8.4" vector-effect="non-scaling-stroke"/></g></g><g transform="translate(660.9,230.9) rotate(-22.6)"><g fill="none" stroke="rgba(90,100,190,0.18)" stroke-width="0.9" stroke-linecap="round" stroke-linejoin="round"><path transform="translate(-18.00,-4.50) scale(0.860)" d="M2.2 1 L2.2 6 Q2.2 9 0.5 10 M2.2 1 L8 1 L8 10 M0.5 6 L9.6 6 M4 3 L5.2 4.4" vector-effect="non-scaling-stroke"/><path transform="translate(-8.80,-4.50) scale(0.860)" d="M1 2 L9 2 M5 0 L2 5.6 L8.6 5.6 M5 3.6 L5 9.4 Q5 10 4 10 M3 7 L1.4 9.2 M7 7 L9 9.2" vector-effect="non-scaling-stroke"/><path transform="translate(0.40,-4.50) scale(0.860)" d="M0.6 0.8 L1.6 1.8 M0.2 3.8 L1.6 4.8 M0.4 9.6 L2 6.6 M4.6 0.4 L3.6 2.4 M3.8 2 L9 2 M6.6 0 L6.6 4 M3 4 L9.6 4 M4 6 h5.2 v4 h-5.2 Z" vector-effect="non-scaling-stroke"/><path transform="translate(9.60,-4.50) scale(0.860)" d="M2 1 L8 1 M0.4 4 L9.6 4 M4 4 Q4 8.6 0.8 10 M6 4 L6 9 Q6 10 7 10 L9.6 10 L9.6 8.4" vector-effect="non-scaling-stroke"/></g></g><g transform="translate(736.1,199.6) rotate(-22.6)"><g fill="none" stroke="rgba(90,100,190,0.18)" stroke-width="0.9" stroke-linecap="round" stroke-linejoin="round"><path transform="translate(-18.00,-4.50) scale(0.860)" d="M2.2 1 L2.2 6 Q2.2 9 0.5 10 M2.2 1 L8 1 L8 10 M0.5 6 L9.6 6 M4 3 L5.2 4.4" vector-effect="non-scaling-stroke"/><path transform="translate(-8.80,-4.50) scale(0.860)" d="M1 2 L9 2 M5 0 L2 5.6 L8.6 5.6 M5 3.6 L5 9.4 Q5 10 4 10 M3 7 L1.4 9.2 M7 7 L9 9.2" vector-effect="non-scaling-stroke"/><path transform="translate(0.40,-4.50) scale(0.860)" d="M0.6 0.8 L1.6 1.8 M0.2 3.8 L1.6 4.8 M0.4 9.6 L2 6.6 M4.6 0.4 L3.6 2.4 M3.8 2 L9 2 M6.6 0 L6.6 4 M3 4 L9.6 4 M4 6 h5.2 v4 h-5.2 Z" vector-effect="non-scaling-stroke"/><path transform="translate(9.60,-4.50) scale(0.860)" d="M2 1 L8 1 M0.4 4 L9.6 4 M4 4 Q4 8.6 0.8 10 M6 4 L6 9 Q6 10 7 10 L9.6 10 L9.6 8.4" vector-effect="non-scaling-stroke"/></g></g><g transform="translate(811.3,168.3) rotate(-22.6)"><g fill="none" stroke="rgba(90,100,190,0.18)" stroke-width="0.9" stroke-linecap="round" stroke-linejoin="round"><path transform="translate(-18.00,-4.50) scale(0.860)" d="M2.2 1 L2.2 6 Q2.2 9 0.5 10 M2.2 1 L8 1 L8 10 M0.5 6 L9.6 6 M4 3 L5.2 4.4" vector-effect="non-scaling-stroke"/><path transform="translate(-8.80,-4.50) scale(0.860)" d="M1 2 L9 2 M5 0 L2 5.6 L8.6 5.6 M5 3.6 L5 9.4 Q5 10 4 10 M3 7 L1.4 9.2 M7 7 L9 9.2" vector-effect="non-scaling-stroke"/><path transform="translate(0.40,-4.50) scale(0.860)" d="M0.6 0.8 L1.6 1.8 M0.2 3.8 L1.6 4.8 M0.4 9.6 L2 6.6 M4.6 0.4 L3.6 2.4 M3.8 2 L9 2 M6.6 0 L6.6 4 M3 4 L9.6 4 M4 6 h5.2 v4 h-5.2 Z" vector-effect="non-scaling-stroke"/><path transform="translate(9.60,-4.50) scale(0.860)" d="M2 1 L8 1 M0.4 4 L9.6 4 M4 4 Q4 8.6 0.8 10 M6 4 L6 9 Q6 10 7 10 L9.6 10 L9.6 8.4" vector-effect="non-scaling-stroke"/></g></g><g transform="translate(20.0,592.4) rotate(-22.6)"><g fill="none" stroke="rgba(90,100,190,0.18)" stroke-width="0.9" stroke-linecap="round" stroke-linejoin="round"><path transform="translate(-18.00,-4.50) scale(0.860)" d="M2.2 1 L2.2 6 Q2.2 9 0.5 10 M2.2 1 L8 1 L8 10 M0.5 6 L9.6 6 M4 3 L5.2 4.4" vector-effect="non-scaling-stroke"/><path transform="translate(-8.80,-4.50) scale(0.860)" d="M1 2 L9 2 M5 0 L2 5.6 L8.6 5.6 M5 3.6 L5 9.4 Q5 10 4 10 M3 7 L1.4 9.2 M7 7 L9 9.2" vector-effect="non-scaling-stroke"/><path transform="translate(0.40,-4.50) scale(0.860)" d="M0.6 0.8 L1.6 1.8 M0.2 3.8 L1.6 4.8 M0.4 9.6 L2 6.6 M4.6 0.4 L3.6 2.4 M3.8 2 L9 2 M6.6 0 L6.6 4 M3 4 L9.6 4 M4 6 h5.2 v4 h-5.2 Z" vector-effect="non-scaling-stroke"/><path transform="translate(9.60,-4.50) scale(0.860)" d="M2 1 L8 1 M0.4 4 L9.6 4 M4 4 Q4 8.6 0.8 10 M6 4 L6 9 Q6 10 7 10 L9.6 10 L9.6 8.4" vector-effect="non-scaling-stroke"/></g></g><g transform="translate(95.2,561.1) rotate(-22.6)"><g fill="none" stroke="rgba(90,100,190,0.18)" stroke-width="0.9" stroke-linecap="round" stroke-linejoin="round"><path transform="translate(-18.00,-4.50) scale(0.860)" d="M2.2 1 L2.2 6 Q2.2 9 0.5 10 M2.2 1 L8 1 L8 10 M0.5 6 L9.6 6 M4 3 L5.2 4.4" vector-effect="non-scaling-stroke"/><path transform="translate(-8.80,-4.50) scale(0.860)" d="M1 2 L9 2 M5 0 L2 5.6 L8.6 5.6 M5 3.6 L5 9.4 Q5 10 4 10 M3 7 L1.4 9.2 M7 7 L9 9.2" vector-effect="non-scaling-stroke"/><path transform="translate(0.40,-4.50) scale(0.860)" d="M0.6 0.8 L1.6 1.8 M0.2 3.8 L1.6 4.8 M0.4 9.6 L2 6.6 M4.6 0.4 L3.6 2.4 M3.8 2 L9 2 M6.6 0 L6.6 4 M3 4 L9.6 4 M4 6 h5.2 v4 h-5.2 Z" vector-effect="non-scaling-stroke"/><path transform="translate(9.60,-4.50) scale(0.860)" d="M2 1 L8 1 M0.4 4 L9.6 4 M4 4 Q4 8.6 0.8 10 M6 4 L6 9 Q6 10 7 10 L9.6 10 L9.6 8.4" vector-effect="non-scaling-stroke"/></g></g><g transform="translate(170.4,529.8) rotate(-22.6)"><g fill="none" stroke="rgba(90,100,190,0.18)" stroke-width="0.9" stroke-linecap="round" stroke-linejoin="round"><path transform="translate(-18.00,-4.50) scale(0.860)" d="M2.2 1 L2.2 6 Q2.2 9 0.5 10 M2.2 1 L8 1 L8 10 M0.5 6 L9.6 6 M4 3 L5.2 4.4" vector-effect="non-scaling-stroke"/><path transform="translate(-8.80,-4.50) scale(0.860)" d="M1 2 L9 2 M5 0 L2 5.6 L8.6 5.6 M5 3.6 L5 9.4 Q5 10 4 10 M3 7 L1.4 9.2 M7 7 L9 9.2" vector-effect="non-scaling-stroke"/><path transform="translate(0.40,-4.50) scale(0.860)" d="M0.6 0.8 L1.6 1.8 M0.2 3.8 L1.6 4.8 M0.4 9.6 L2 6.6 M4.6 0.4 L3.6 2.4 M3.8 2 L9 2 M6.6 0 L6.6 4 M3 4 L9.6 4 M4 6 h5.2 v4 h-5.2 Z" vector-effect="non-scaling-stroke"/><path transform="translate(9.60,-4.50) scale(0.860)" d="M2 1 L8 1 M0.4 4 L9.6 4 M4 4 Q4 8.6 0.8 10 M6 4 L6 9 Q6 10 7 10 L9.6 10 L9.6 8.4" vector-effect="non-scaling-stroke"/></g></g><g transform="translate(245.6,498.5) rotate(-22.6)"><g fill="none" stroke="rgba(90,100,190,0.18)" stroke-width="0.9" stroke-linecap="round" stroke-linejoin="round"><path transform="translate(-18.00,-4.50) scale(0.860)" d="M2.2 1 L2.2 6 Q2.2 9 0.5 10 M2.2 1 L8 1 L8 10 M0.5 6 L9.6 6 M4 3 L5.2 4.4" vector-effect="non-scaling-stroke"/><path transform="translate(-8.80,-4.50) scale(0.860)" d="M1 2 L9 2 M5 0 L2 5.6 L8.6 5.6 M5 3.6 L5 9.4 Q5 10 4 10 M3 7 L1.4 9.2 M7 7 L9 9.2" vector-effect="non-scaling-stroke"/><path transform="translate(0.40,-4.50) scale(0.860)" d="M0.6 0.8 L1.6 1.8 M0.2 3.8 L1.6 4.8 M0.4 9.6 L2 6.6 M4.6 0.4 L3.6 2.4 M3.8 2 L9 2 M6.6 0 L6.6 4 M3 4 L9.6 4 M4 6 h5.2 v4 h-5.2 Z" vector-effect="non-scaling-stroke"/><path transform="translate(9.60,-4.50) scale(0.860)" d="M2 1 L8 1 M0.4 4 L9.6 4 M4 4 Q4 8.6 0.8 10 M6 4 L6 9 Q6 10 7 10 L9.6 10 L9.6 8.4" vector-effect="non-scaling-stroke"/></g></g><g transform="translate(320.8,467.2) rotate(-22.6)"><g fill="none" stroke="rgba(90,100,190,0.18)" stroke-width="0.9" stroke-linecap="round" stroke-linejoin="round"><path transform="translate(-18.00,-4.50) scale(0.860)" d="M2.2 1 L2.2 6 Q2.2 9 0.5 10 M2.2 1 L8 1 L8 10 M0.5 6 L9.6 6 M4 3 L5.2 4.4" vector-effect="non-scaling-stroke"/><path transform="translate(-8.80,-4.50) scale(0.860)" d="M1 2 L9 2 M5 0 L2 5.6 L8.6 5.6 M5 3.6 L5 9.4 Q5 10 4 10 M3 7 L1.4 9.2 M7 7 L9 9.2" vector-effect="non-scaling-stroke"/><path transform="translate(0.40,-4.50) scale(0.860)" d="M0.6 0.8 L1.6 1.8 M0.2 3.8 L1.6 4.8 M0.4 9.6 L2 6.6 M4.6 0.4 L3.6 2.4 M3.8 2 L9 2 M6.6 0 L6.6 4 M3 4 L9.6 4 M4 6 h5.2 v4 h-5.2 Z" vector-effect="non-scaling-stroke"/><path transform="translate(9.60,-4.50) scale(0.860)" d="M2 1 L8 1 M0.4 4 L9.6 4 M4 4 Q4 8.6 0.8 10 M6 4 L6 9 Q6 10 7 10 L9.6 10 L9.6 8.4" vector-effect="non-scaling-stroke"/></g></g><g transform="translate(396.0,435.9) rotate(-22.6)"><g fill="none" stroke="rgba(90,100,190,0.18)" stroke-width="0.9" stroke-linecap="round" stroke-linejoin="round"><path transform="translate(-18.00,-4.50) scale(0.860)" d="M2.2 1 L2.2 6 Q2.2 9 0.5 10 M2.2 1 L8 1 L8 10 M0.5 6 L9.6 6 M4 3 L5.2 4.4" vector-effect="non-scaling-stroke"/><path transform="translate(-8.80,-4.50) scale(0.860)" d="M1 2 L9 2 M5 0 L2 5.6 L8.6 5.6 M5 3.6 L5 9.4 Q5 10 4 10 M3 7 L1.4 9.2 M7 7 L9 9.2" vector-effect="non-scaling-stroke"/><path transform="translate(0.40,-4.50) scale(0.860)" d="M0.6 0.8 L1.6 1.8 M0.2 3.8 L1.6 4.8 M0.4 9.6 L2 6.6 M4.6 0.4 L3.6 2.4 M3.8 2 L9 2 M6.6 0 L6.6 4 M3 4 L9.6 4 M4 6 h5.2 v4 h-5.2 Z" vector-effect="non-scaling-stroke"/><path transform="translate(9.60,-4.50) scale(0.860)" d="M2 1 L8 1 M0.4 4 L9.6 4 M4 4 Q4 8.6 0.8 10 M6 4 L6 9 Q6 10 7 10 L9.6 10 L9.6 8.4" vector-effect="non-scaling-stroke"/></g></g><g transform="translate(471.2,404.6) rotate(-22.6)"><g fill="none" stroke="rgba(90,100,190,0.18)" stroke-width="0.9" stroke-linecap="round" stroke-linejoin="round"><path transform="translate(-18.00,-4.50) scale(0.860)" d="M2.2 1 L2.2 6 Q2.2 9 0.5 10 M2.2 1 L8 1 L8 10 M0.5 6 L9.6 6 M4 3 L5.2 4.4" vector-effect="non-scaling-stroke"/><path transform="translate(-8.80,-4.50) scale(0.860)" d="M1 2 L9 2 M5 0 L2 5.6 L8.6 5.6 M5 3.6 L5 9.4 Q5 10 4 10 M3 7 L1.4 9.2 M7 7 L9 9.2" vector-effect="non-scaling-stroke"/><path transform="translate(0.40,-4.50) scale(0.860)" d="M0.6 0.8 L1.6 1.8 M0.2 3.8 L1.6 4.8 M0.4 9.6 L2 6.6 M4.6 0.4 L3.6 2.4 M3.8 2 L9 2 M6.6 0 L6.6 4 M3 4 L9.6 4 M4 6 h5.2 v4 h-5.2 Z" vector-effect="non-scaling-stroke"/><path transform="translate(9.60,-4.50) scale(0.860)" d="M2 1 L8 1 M0.4 4 L9.6 4 M4 4 Q4 8.6 0.8 10 M6 4 L6 9 Q6 10 7 10 L9.6 10 L9.6 8.4" vector-effect="non-scaling-stroke"/></g></g><g transform="translate(546.4,373.3) rotate(-22.6)"><g fill="none" stroke="rgba(90,100,190,0.18)" stroke-width="0.9" stroke-linecap="round" stroke-linejoin="round"><path transform="translate(-18.00,-4.50) scale(0.860)" d="M2.2 1 L2.2 6 Q2.2 9 0.5 10 M2.2 1 L8 1 L8 10 M0.5 6 L9.6 6 M4 3 L5.2 4.4" vector-effect="non-scaling-stroke"/><path transform="translate(-8.80,-4.50) scale(0.860)" d="M1 2 L9 2 M5 0 L2 5.6 L8.6 5.6 M5 3.6 L5 9.4 Q5 10 4 10 M3 7 L1.4 9.2 M7 7 L9 9.2" vector-effect="non-scaling-stroke"/><path transform="translate(0.40,-4.50) scale(0.860)" d="M0.6 0.8 L1.6 1.8 M0.2 3.8 L1.6 4.8 M0.4 9.6 L2 6.6 M4.6 0.4 L3.6 2.4 M3.8 2 L9 2 M6.6 0 L6.6 4 M3 4 L9.6 4 M4 6 h5.2 v4 h-5.2 Z" vector-effect="non-scaling-stroke"/><path transform="translate(9.60,-4.50) scale(0.860)" d="M2 1 L8 1 M0.4 4 L9.6 4 M4 4 Q4 8.6 0.8 10 M6 4 L6 9 Q6 10 7 10 L9.6 10 L9.6 8.4" vector-effect="non-scaling-stroke"/></g></g><g transform="translate(621.6,342.0) rotate(-22.6)"><g fill="none" stroke="rgba(90,100,190,0.18)" stroke-width="0.9" stroke-linecap="round" stroke-linejoin="round"><path transform="translate(-18.00,-4.50) scale(0.860)" d="M2.2 1 L2.2 6 Q2.2 9 0.5 10 M2.2 1 L8 1 L8 10 M0.5 6 L9.6 6 M4 3 L5.2 4.4" vector-effect="non-scaling-stroke"/><path transform="translate(-8.80,-4.50) scale(0.860)" d="M1 2 L9 2 M5 0 L2 5.6 L8.6 5.6 M5 3.6 L5 9.4 Q5 10 4 10 M3 7 L1.4 9.2 M7 7 L9 9.2" vector-effect="non-scaling-stroke"/><path transform="translate(0.40,-4.50) scale(0.860)" d="M0.6 0.8 L1.6 1.8 M0.2 3.8 L1.6 4.8 M0.4 9.6 L2 6.6 M4.6 0.4 L3.6 2.4 M3.8 2 L9 2 M6.6 0 L6.6 4 M3 4 L9.6 4 M4 6 h5.2 v4 h-5.2 Z" vector-effect="non-scaling-stroke"/><path transform="translate(9.60,-4.50) scale(0.860)" d="M2 1 L8 1 M0.4 4 L9.6 4 M4 4 Q4 8.6 0.8 10 M6 4 L6 9 Q6 10 7 10 L9.6 10 L9.6 8.4" vector-effect="non-scaling-stroke"/></g></g><g transform="translate(696.8,310.7) rotate(-22.6)"><g fill="none" stroke="rgba(90,100,190,0.18)" stroke-width="0.9" stroke-linecap="round" stroke-linejoin="round"><path transform="translate(-18.00,-4.50) scale(0.860)" d="M2.2 1 L2.2 6 Q2.2 9 0.5 10 M2.2 1 L8 1 L8 10 M0.5 6 L9.6 6 M4 3 L5.2 4.4" vector-effect="non-scaling-stroke"/><path transform="translate(-8.80,-4.50) scale(0.860)" d="M1 2 L9 2 M5 0 L2 5.6 L8.6 5.6 M5 3.6 L5 9.4 Q5 10 4 10 M3 7 L1.4 9.2 M7 7 L9 9.2" vector-effect="non-scaling-stroke"/><path transform="translate(0.40,-4.50) scale(0.860)" d="M0.6 0.8 L1.6 1.8 M0.2 3.8 L1.6 4.8 M0.4 9.6 L2 6.6 M4.6 0.4 L3.6 2.4 M3.8 2 L9 2 M6.6 0 L6.6 4 M3 4 L9.6 4 M4 6 h5.2 v4 h-5.2 Z" vector-effect="non-scaling-stroke"/><path transform="translate(9.60,-4.50) scale(0.860)" d="M2 1 L8 1 M0.4 4 L9.6 4 M4 4 Q4 8.6 0.8 10 M6 4 L6 9 Q6 10 7 10 L9.6 10 L9.6 8.4" vector-effect="non-scaling-stroke"/></g></g><g transform="translate(772.0,279.4) rotate(-22.6)"><g fill="none" stroke="rgba(90,100,190,0.18)" stroke-width="0.9" stroke-linecap="round" stroke-linejoin="round"><path transform="translate(-18.00,-4.50) scale(0.860)" d="M2.2 1 L2.2 6 Q2.2 9 0.5 10 M2.2 1 L8 1 L8 10 M0.5 6 L9.6 6 M4 3 L5.2 4.4" vector-effect="non-scaling-stroke"/><path transform="translate(-8.80,-4.50) scale(0.860)" d="M1 2 L9 2 M5 0 L2 5.6 L8.6 5.6 M5 3.6 L5 9.4 Q5 10 4 10 M3 7 L1.4 9.2 M7 7 L9 9.2" vector-effect="non-scaling-stroke"/><path transform="translate(0.40,-4.50) scale(0.860)" d="M0.6 0.8 L1.6 1.8 M0.2 3.8 L1.6 4.8 M0.4 9.6 L2 6.6 M4.6 0.4 L3.6 2.4 M3.8 2 L9 2 M6.6 0 L6.6 4 M3 4 L9.6 4 M4 6 h5.2 v4 h-5.2 Z" vector-effect="non-scaling-stroke"/><path transform="translate(9.60,-4.50) scale(0.860)" d="M2 1 L8 1 M0.4 4 L9.6 4 M4 4 Q4 8.6 0.8 10 M6 4 L6 9 Q6 10 7 10 L9.6 10 L9.6 8.4" vector-effect="non-scaling-stroke"/></g></g><g transform="translate(-19.6,699.0) rotate(-22.6)"><g fill="none" stroke="rgba(90,100,190,0.18)" stroke-width="0.9" stroke-linecap="round" stroke-linejoin="round"><path transform="translate(-18.00,-4.50) scale(0.860)" d="M2.2 1 L2.2 6 Q2.2 9 0.5 10 M2.2 1 L8 1 L8 10 M0.5 6 L9.6 6 M4 3 L5.2 4.4" vector-effect="non-scaling-stroke"/><path transform="translate(-8.80,-4.50) scale(0.860)" d="M1 2 L9 2 M5 0 L2 5.6 L8.6 5.6 M5 3.6 L5 9.4 Q5 10 4 10 M3 7 L1.4 9.2 M7 7 L9 9.2" vector-effect="non-scaling-stroke"/><path transform="translate(0.40,-4.50) scale(0.860)" d="M0.6 0.8 L1.6 1.8 M0.2 3.8 L1.6 4.8 M0.4 9.6 L2 6.6 M4.6 0.4 L3.6 2.4 M3.8 2 L9 2 M6.6 0 L6.6 4 M3 4 L9.6 4 M4 6 h5.2 v4 h-5.2 Z" vector-effect="non-scaling-stroke"/><path transform="translate(9.60,-4.50) scale(0.860)" d="M2 1 L8 1 M0.4 4 L9.6 4 M4 4 Q4 8.6 0.8 10 M6 4 L6 9 Q6 10 7 10 L9.6 10 L9.6 8.4" vector-effect="non-scaling-stroke"/></g></g><g transform="translate(55.6,667.7) rotate(-22.6)"><g fill="none" stroke="rgba(90,100,190,0.18)" stroke-width="0.9" stroke-linecap="round" stroke-linejoin="round"><path transform="translate(-18.00,-4.50) scale(0.860)" d="M2.2 1 L2.2 6 Q2.2 9 0.5 10 M2.2 1 L8 1 L8 10 M0.5 6 L9.6 6 M4 3 L5.2 4.4" vector-effect="non-scaling-stroke"/><path transform="translate(-8.80,-4.50) scale(0.860)" d="M1 2 L9 2 M5 0 L2 5.6 L8.6 5.6 M5 3.6 L5 9.4 Q5 10 4 10 M3 7 L1.4 9.2 M7 7 L9 9.2" vector-effect="non-scaling-stroke"/><path transform="translate(0.40,-4.50) scale(0.860)" d="M0.6 0.8 L1.6 1.8 M0.2 3.8 L1.6 4.8 M0.4 9.6 L2 6.6 M4.6 0.4 L3.6 2.4 M3.8 2 L9 2 M6.6 0 L6.6 4 M3 4 L9.6 4 M4 6 h5.2 v4 h-5.2 Z" vector-effect="non-scaling-stroke"/><path transform="translate(9.60,-4.50) scale(0.860)" d="M2 1 L8 1 M0.4 4 L9.6 4 M4 4 Q4 8.6 0.8 10 M6 4 L6 9 Q6 10 7 10 L9.6 10 L9.6 8.4" vector-effect="non-scaling-stroke"/></g></g><g transform="translate(130.8,636.4) rotate(-22.6)"><g fill="none" stroke="rgba(90,100,190,0.18)" stroke-width="0.9" stroke-linecap="round" stroke-linejoin="round"><path transform="translate(-18.00,-4.50) scale(0.860)" d="M2.2 1 L2.2 6 Q2.2 9 0.5 10 M2.2 1 L8 1 L8 10 M0.5 6 L9.6 6 M4 3 L5.2 4.4" vector-effect="non-scaling-stroke"/><path transform="translate(-8.80,-4.50) scale(0.860)" d="M1 2 L9 2 M5 0 L2 5.6 L8.6 5.6 M5 3.6 L5 9.4 Q5 10 4 10 M3 7 L1.4 9.2 M7 7 L9 9.2" vector-effect="non-scaling-stroke"/><path transform="translate(0.40,-4.50) scale(0.860)" d="M0.6 0.8 L1.6 1.8 M0.2 3.8 L1.6 4.8 M0.4 9.6 L2 6.6 M4.6 0.4 L3.6 2.4 M3.8 2 L9 2 M6.6 0 L6.6 4 M3 4 L9.6 4 M4 6 h5.2 v4 h-5.2 Z" vector-effect="non-scaling-stroke"/><path transform="translate(9.60,-4.50) scale(0.860)" d="M2 1 L8 1 M0.4 4 L9.6 4 M4 4 Q4 8.6 0.8 10 M6 4 L6 9 Q6 10 7 10 L9.6 10 L9.6 8.4" vector-effect="non-scaling-stroke"/></g></g><g transform="translate(206.0,605.1) rotate(-22.6)"><g fill="none" stroke="rgba(90,100,190,0.18)" stroke-width="0.9" stroke-linecap="round" stroke-linejoin="round"><path transform="translate(-18.00,-4.50) scale(0.860)" d="M2.2 1 L2.2 6 Q2.2 9 0.5 10 M2.2 1 L8 1 L8 10 M0.5 6 L9.6 6 M4 3 L5.2 4.4" vector-effect="non-scaling-stroke"/><path transform="translate(-8.80,-4.50) scale(0.860)" d="M1 2 L9 2 M5 0 L2 5.6 L8.6 5.6 M5 3.6 L5 9.4 Q5 10 4 10 M3 7 L1.4 9.2 M7 7 L9 9.2" vector-effect="non-scaling-stroke"/><path transform="translate(0.40,-4.50) scale(0.860)" d="M0.6 0.8 L1.6 1.8 M0.2 3.8 L1.6 4.8 M0.4 9.6 L2 6.6 M4.6 0.4 L3.6 2.4 M3.8 2 L9 2 M6.6 0 L6.6 4 M3 4 L9.6 4 M4 6 h5.2 v4 h-5.2 Z" vector-effect="non-scaling-stroke"/><path transform="translate(9.60,-4.50) scale(0.860)" d="M2 1 L8 1 M0.4 4 L9.6 4 M4 4 Q4 8.6 0.8 10 M6 4 L6 9 Q6 10 7 10 L9.6 10 L9.6 8.4" vector-effect="non-scaling-stroke"/></g></g><g transform="translate(281.2,573.8) rotate(-22.6)"><g fill="none" stroke="rgba(90,100,190,0.18)" stroke-width="0.9" stroke-linecap="round" stroke-linejoin="round"><path transform="translate(-18.00,-4.50) scale(0.860)" d="M2.2 1 L2.2 6 Q2.2 9 0.5 10 M2.2 1 L8 1 L8 10 M0.5 6 L9.6 6 M4 3 L5.2 4.4" vector-effect="non-scaling-stroke"/><path transform="translate(-8.80,-4.50) scale(0.860)" d="M1 2 L9 2 M5 0 L2 5.6 L8.6 5.6 M5 3.6 L5 9.4 Q5 10 4 10 M3 7 L1.4 9.2 M7 7 L9 9.2" vector-effect="non-scaling-stroke"/><path transform="translate(0.40,-4.50) scale(0.860)" d="M0.6 0.8 L1.6 1.8 M0.2 3.8 L1.6 4.8 M0.4 9.6 L2 6.6 M4.6 0.4 L3.6 2.4 M3.8 2 L9 2 M6.6 0 L6.6 4 M3 4 L9.6 4 M4 6 h5.2 v4 h-5.2 Z" vector-effect="non-scaling-stroke"/><path transform="translate(9.60,-4.50) scale(0.860)" d="M2 1 L8 1 M0.4 4 L9.6 4 M4 4 Q4 8.6 0.8 10 M6 4 L6 9 Q6 10 7 10 L9.6 10 L9.6 8.4" vector-effect="non-scaling-stroke"/></g></g><g transform="translate(356.4,542.5) rotate(-22.6)"><g fill="none" stroke="rgba(90,100,190,0.18)" stroke-width="0.9" stroke-linecap="round" stroke-linejoin="round"><path transform="translate(-18.00,-4.50) scale(0.860)" d="M2.2 1 L2.2 6 Q2.2 9 0.5 10 M2.2 1 L8 1 L8 10 M0.5 6 L9.6 6 M4 3 L5.2 4.4" vector-effect="non-scaling-stroke"/><path transform="translate(-8.80,-4.50) scale(0.860)" d="M1 2 L9 2 M5 0 L2 5.6 L8.6 5.6 M5 3.6 L5 9.4 Q5 10 4 10 M3 7 L1.4 9.2 M7 7 L9 9.2" vector-effect="non-scaling-stroke"/><path transform="translate(0.40,-4.50) scale(0.860)" d="M0.6 0.8 L1.6 1.8 M0.2 3.8 L1.6 4.8 M0.4 9.6 L2 6.6 M4.6 0.4 L3.6 2.4 M3.8 2 L9 2 M6.6 0 L6.6 4 M3 4 L9.6 4 M4 6 h5.2 v4 h-5.2 Z" vector-effect="non-scaling-stroke"/><path transform="translate(9.60,-4.50) scale(0.860)" d="M2 1 L8 1 M0.4 4 L9.6 4 M4 4 Q4 8.6 0.8 10 M6 4 L6 9 Q6 10 7 10 L9.6 10 L9.6 8.4" vector-effect="non-scaling-stroke"/></g></g><g transform="translate(431.6,511.2) rotate(-22.6)"><g fill="none" stroke="rgba(90,100,190,0.18)" stroke-width="0.9" stroke-linecap="round" stroke-linejoin="round"><path transform="translate(-18.00,-4.50) scale(0.860)" d="M2.2 1 L2.2 6 Q2.2 9 0.5 10 M2.2 1 L8 1 L8 10 M0.5 6 L9.6 6 M4 3 L5.2 4.4" vector-effect="non-scaling-stroke"/><path transform="translate(-8.80,-4.50) scale(0.860)" d="M1 2 L9 2 M5 0 L2 5.6 L8.6 5.6 M5 3.6 L5 9.4 Q5 10 4 10 M3 7 L1.4 9.2 M7 7 L9 9.2" vector-effect="non-scaling-stroke"/><path transform="translate(0.40,-4.50) scale(0.860)" d="M0.6 0.8 L1.6 1.8 M0.2 3.8 L1.6 4.8 M0.4 9.6 L2 6.6 M4.6 0.4 L3.6 2.4 M3.8 2 L9 2 M6.6 0 L6.6 4 M3 4 L9.6 4 M4 6 h5.2 v4 h-5.2 Z" vector-effect="non-scaling-stroke"/><path transform="translate(9.60,-4.50) scale(0.860)" d="M2 1 L8 1 M0.4 4 L9.6 4 M4 4 Q4 8.6 0.8 10 M6 4 L6 9 Q6 10 7 10 L9.6 10 L9.6 8.4" vector-effect="non-scaling-stroke"/></g></g><g transform="translate(506.8,479.9) rotate(-22.6)"><g fill="none" stroke="rgba(90,100,190,0.18)" stroke-width="0.9" stroke-linecap="round" stroke-linejoin="round"><path transform="translate(-18.00,-4.50) scale(0.860)" d="M2.2 1 L2.2 6 Q2.2 9 0.5 10 M2.2 1 L8 1 L8 10 M0.5 6 L9.6 6 M4 3 L5.2 4.4" vector-effect="non-scaling-stroke"/><path transform="translate(-8.80,-4.50) scale(0.860)" d="M1 2 L9 2 M5 0 L2 5.6 L8.6 5.6 M5 3.6 L5 9.4 Q5 10 4 10 M3 7 L1.4 9.2 M7 7 L9 9.2" vector-effect="non-scaling-stroke"/><path transform="translate(0.40,-4.50) scale(0.860)" d="M0.6 0.8 L1.6 1.8 M0.2 3.8 L1.6 4.8 M0.4 9.6 L2 6.6 M4.6 0.4 L3.6 2.4 M3.8 2 L9 2 M6.6 0 L6.6 4 M3 4 L9.6 4 M4 6 h5.2 v4 h-5.2 Z" vector-effect="non-scaling-stroke"/><path transform="translate(9.60,-4.50) scale(0.860)" d="M2 1 L8 1 M0.4 4 L9.6 4 M4 4 Q4 8.6 0.8 10 M6 4 L6 9 Q6 10 7 10 L9.6 10 L9.6 8.4" vector-effect="non-scaling-stroke"/></g></g><g transform="translate(582.0,448.6) rotate(-22.6)"><g fill="none" stroke="rgba(90,100,190,0.18)" stroke-width="0.9" stroke-linecap="round" stroke-linejoin="round"><path transform="translate(-18.00,-4.50) scale(0.860)" d="M2.2 1 L2.2 6 Q2.2 9 0.5 10 M2.2 1 L8 1 L8 10 M0.5 6 L9.6 6 M4 3 L5.2 4.4" vector-effect="non-scaling-stroke"/><path transform="translate(-8.80,-4.50) scale(0.860)" d="M1 2 L9 2 M5 0 L2 5.6 L8.6 5.6 M5 3.6 L5 9.4 Q5 10 4 10 M3 7 L1.4 9.2 M7 7 L9 9.2" vector-effect="non-scaling-stroke"/><path transform="translate(0.40,-4.50) scale(0.860)" d="M0.6 0.8 L1.6 1.8 M0.2 3.8 L1.6 4.8 M0.4 9.6 L2 6.6 M4.6 0.4 L3.6 2.4 M3.8 2 L9 2 M6.6 0 L6.6 4 M3 4 L9.6 4 M4 6 h5.2 v4 h-5.2 Z" vector-effect="non-scaling-stroke"/><path transform="translate(9.60,-4.50) scale(0.860)" d="M2 1 L8 1 M0.4 4 L9.6 4 M4 4 Q4 8.6 0.8 10 M6 4 L6 9 Q6 10 7 10 L9.6 10 L9.6 8.4" vector-effect="non-scaling-stroke"/></g></g><g transform="translate(657.2,417.3) rotate(-22.6)"><g fill="none" stroke="rgba(90,100,190,0.18)" stroke-width="0.9" stroke-linecap="round" stroke-linejoin="round"><path transform="translate(-18.00,-4.50) scale(0.860)" d="M2.2 1 L2.2 6 Q2.2 9 0.5 10 M2.2 1 L8 1 L8 10 M0.5 6 L9.6 6 M4 3 L5.2 4.4" vector-effect="non-scaling-stroke"/><path transform="translate(-8.80,-4.50) scale(0.860)" d="M1 2 L9 2 M5 0 L2 5.6 L8.6 5.6 M5 3.6 L5 9.4 Q5 10 4 10 M3 7 L1.4 9.2 M7 7 L9 9.2" vector-effect="non-scaling-stroke"/><path transform="translate(0.40,-4.50) scale(0.860)" d="M0.6 0.8 L1.6 1.8 M0.2 3.8 L1.6 4.8 M0.4 9.6 L2 6.6 M4.6 0.4 L3.6 2.4 M3.8 2 L9 2 M6.6 0 L6.6 4 M3 4 L9.6 4 M4 6 h5.2 v4 h-5.2 Z" vector-effect="non-scaling-stroke"/><path transform="translate(9.60,-4.50) scale(0.860)" d="M2 1 L8 1 M0.4 4 L9.6 4 M4 4 Q4 8.6 0.8 10 M6 4 L6 9 Q6 10 7 10 L9.6 10 L9.6 8.4" vector-effect="non-scaling-stroke"/></g></g><g transform="translate(732.4,386.0) rotate(-22.6)"><g fill="none" stroke="rgba(90,100,190,0.18)" stroke-width="0.9" stroke-linecap="round" stroke-linejoin="round"><path transform="translate(-18.00,-4.50) scale(0.860)" d="M2.2 1 L2.2 6 Q2.2 9 0.5 10 M2.2 1 L8 1 L8 10 M0.5 6 L9.6 6 M4 3 L5.2 4.4" vector-effect="non-scaling-stroke"/><path transform="translate(-8.80,-4.50) scale(0.860)" d="M1 2 L9 2 M5 0 L2 5.6 L8.6 5.6 M5 3.6 L5 9.4 Q5 10 4 10 M3 7 L1.4 9.2 M7 7 L9 9.2" vector-effect="non-scaling-stroke"/><path transform="translate(0.40,-4.50) scale(0.860)" d="M0.6 0.8 L1.6 1.8 M0.2 3.8 L1.6 4.8 M0.4 9.6 L2 6.6 M4.6 0.4 L3.6 2.4 M3.8 2 L9 2 M6.6 0 L6.6 4 M3 4 L9.6 4 M4 6 h5.2 v4 h-5.2 Z" vector-effect="non-scaling-stroke"/><path transform="translate(9.60,-4.50) scale(0.860)" d="M2 1 L8 1 M0.4 4 L9.6 4 M4 4 Q4 8.6 0.8 10 M6 4 L6 9 Q6 10 7 10 L9.6 10 L9.6 8.4" vector-effect="non-scaling-stroke"/></g></g><g transform="translate(807.6,354.7) rotate(-22.6)"><g fill="none" stroke="rgba(90,100,190,0.18)" stroke-width="0.9" stroke-linecap="round" stroke-linejoin="round"><path transform="translate(-18.00,-4.50) scale(0.860)" d="M2.2 1 L2.2 6 Q2.2 9 0.5 10 M2.2 1 L8 1 L8 10 M0.5 6 L9.6 6 M4 3 L5.2 4.4" vector-effect="non-scaling-stroke"/><path transform="translate(-8.80,-4.50) scale(0.860)" d="M1 2 L9 2 M5 0 L2 5.6 L8.6 5.6 M5 3.6 L5 9.4 Q5 10 4 10 M3 7 L1.4 9.2 M7 7 L9 9.2" vector-effect="non-scaling-stroke"/><path transform="translate(0.40,-4.50) scale(0.860)" d="M0.6 0.8 L1.6 1.8 M0.2 3.8 L1.6 4.8 M0.4 9.6 L2 6.6 M4.6 0.4 L3.6 2.4 M3.8 2 L9 2 M6.6 0 L6.6 4 M3 4 L9.6 4 M4 6 h5.2 v4 h-5.2 Z" vector-effect="non-scaling-stroke"/><path transform="translate(9.60,-4.50) scale(0.860)" d="M2 1 L8 1 M0.4 4 L9.6 4 M4 4 Q4 8.6 0.8 10 M6 4 L6 9 Q6 10 7 10 L9.6 10 L9.6 8.4" vector-effect="non-scaling-stroke"/></g></g><g transform="translate(169.7,718.6) rotate(-22.6)"><g fill="none" stroke="rgba(90,100,190,0.18)" stroke-width="0.9" stroke-linecap="round" stroke-linejoin="round"><path transform="translate(-18.00,-4.50) scale(0.860)" d="M2.2 1 L2.2 6 Q2.2 9 0.5 10 M2.2 1 L8 1 L8 10 M0.5 6 L9.6 6 M4 3 L5.2 4.4" vector-effect="non-scaling-stroke"/><path transform="translate(-8.80,-4.50) scale(0.860)" d="M1 2 L9 2 M5 0 L2 5.6 L8.6 5.6 M5 3.6 L5 9.4 Q5 10 4 10 M3 7 L1.4 9.2 M7 7 L9 9.2" vector-effect="non-scaling-stroke"/><path transform="translate(0.40,-4.50) scale(0.860)" d="M0.6 0.8 L1.6 1.8 M0.2 3.8 L1.6 4.8 M0.4 9.6 L2 6.6 M4.6 0.4 L3.6 2.4 M3.8 2 L9 2 M6.6 0 L6.6 4 M3 4 L9.6 4 M4 6 h5.2 v4 h-5.2 Z" vector-effect="non-scaling-stroke"/><path transform="translate(9.60,-4.50) scale(0.860)" d="M2 1 L8 1 M0.4 4 L9.6 4 M4 4 Q4 8.6 0.8 10 M6 4 L6 9 Q6 10 7 10 L9.6 10 L9.6 8.4" vector-effect="non-scaling-stroke"/></g></g><g transform="translate(244.9,687.3) rotate(-22.6)"><g fill="none" stroke="rgba(90,100,190,0.18)" stroke-width="0.9" stroke-linecap="round" stroke-linejoin="round"><path transform="translate(-18.00,-4.50) scale(0.860)" d="M2.2 1 L2.2 6 Q2.2 9 0.5 10 M2.2 1 L8 1 L8 10 M0.5 6 L9.6 6 M4 3 L5.2 4.4" vector-effect="non-scaling-stroke"/><path transform="translate(-8.80,-4.50) scale(0.860)" d="M1 2 L9 2 M5 0 L2 5.6 L8.6 5.6 M5 3.6 L5 9.4 Q5 10 4 10 M3 7 L1.4 9.2 M7 7 L9 9.2" vector-effect="non-scaling-stroke"/><path transform="translate(0.40,-4.50) scale(0.860)" d="M0.6 0.8 L1.6 1.8 M0.2 3.8 L1.6 4.8 M0.4 9.6 L2 6.6 M4.6 0.4 L3.6 2.4 M3.8 2 L9 2 M6.6 0 L6.6 4 M3 4 L9.6 4 M4 6 h5.2 v4 h-5.2 Z" vector-effect="non-scaling-stroke"/><path transform="translate(9.60,-4.50) scale(0.860)" d="M2 1 L8 1 M0.4 4 L9.6 4 M4 4 Q4 8.6 0.8 10 M6 4 L6 9 Q6 10 7 10 L9.6 10 L9.6 8.4" vector-effect="non-scaling-stroke"/></g></g><g transform="translate(320.1,656.0) rotate(-22.6)"><g fill="none" stroke="rgba(90,100,190,0.18)" stroke-width="0.9" stroke-linecap="round" stroke-linejoin="round"><path transform="translate(-18.00,-4.50) scale(0.860)" d="M2.2 1 L2.2 6 Q2.2 9 0.5 10 M2.2 1 L8 1 L8 10 M0.5 6 L9.6 6 M4 3 L5.2 4.4" vector-effect="non-scaling-stroke"/><path transform="translate(-8.80,-4.50) scale(0.860)" d="M1 2 L9 2 M5 0 L2 5.6 L8.6 5.6 M5 3.6 L5 9.4 Q5 10 4 10 M3 7 L1.4 9.2 M7 7 L9 9.2" vector-effect="non-scaling-stroke"/><path transform="translate(0.40,-4.50) scale(0.860)" d="M0.6 0.8 L1.6 1.8 M0.2 3.8 L1.6 4.8 M0.4 9.6 L2 6.6 M4.6 0.4 L3.6 2.4 M3.8 2 L9 2 M6.6 0 L6.6 4 M3 4 L9.6 4 M4 6 h5.2 v4 h-5.2 Z" vector-effect="non-scaling-stroke"/><path transform="translate(9.60,-4.50) scale(0.860)" d="M2 1 L8 1 M0.4 4 L9.6 4 M4 4 Q4 8.6 0.8 10 M6 4 L6 9 Q6 10 7 10 L9.6 10 L9.6 8.4" vector-effect="non-scaling-stroke"/></g></g><g transform="translate(395.3,624.7) rotate(-22.6)"><g fill="none" stroke="rgba(90,100,190,0.18)" stroke-width="0.9" stroke-linecap="round" stroke-linejoin="round"><path transform="translate(-18.00,-4.50) scale(0.860)" d="M2.2 1 L2.2 6 Q2.2 9 0.5 10 M2.2 1 L8 1 L8 10 M0.5 6 L9.6 6 M4 3 L5.2 4.4" vector-effect="non-scaling-stroke"/><path transform="translate(-8.80,-4.50) scale(0.860)" d="M1 2 L9 2 M5 0 L2 5.6 L8.6 5.6 M5 3.6 L5 9.4 Q5 10 4 10 M3 7 L1.4 9.2 M7 7 L9 9.2" vector-effect="non-scaling-stroke"/><path transform="translate(0.40,-4.50) scale(0.860)" d="M0.6 0.8 L1.6 1.8 M0.2 3.8 L1.6 4.8 M0.4 9.6 L2 6.6 M4.6 0.4 L3.6 2.4 M3.8 2 L9 2 M6.6 0 L6.6 4 M3 4 L9.6 4 M4 6 h5.2 v4 h-5.2 Z" vector-effect="non-scaling-stroke"/><path transform="translate(9.60,-4.50) scale(0.860)" d="M2 1 L8 1 M0.4 4 L9.6 4 M4 4 Q4 8.6 0.8 10 M6 4 L6 9 Q6 10 7 10 L9.6 10 L9.6 8.4" vector-effect="non-scaling-stroke"/></g></g><g transform="translate(470.5,593.4) rotate(-22.6)"><g fill="none" stroke="rgba(90,100,190,0.18)" stroke-width="0.9" stroke-linecap="round" stroke-linejoin="round"><path transform="translate(-18.00,-4.50) scale(0.860)" d="M2.2 1 L2.2 6 Q2.2 9 0.5 10 M2.2 1 L8 1 L8 10 M0.5 6 L9.6 6 M4 3 L5.2 4.4" vector-effect="non-scaling-stroke"/><path transform="translate(-8.80,-4.50) scale(0.860)" d="M1 2 L9 2 M5 0 L2 5.6 L8.6 5.6 M5 3.6 L5 9.4 Q5 10 4 10 M3 7 L1.4 9.2 M7 7 L9 9.2" vector-effect="non-scaling-stroke"/><path transform="translate(0.40,-4.50) scale(0.860)" d="M0.6 0.8 L1.6 1.8 M0.2 3.8 L1.6 4.8 M0.4 9.6 L2 6.6 M4.6 0.4 L3.6 2.4 M3.8 2 L9 2 M6.6 0 L6.6 4 M3 4 L9.6 4 M4 6 h5.2 v4 h-5.2 Z" vector-effect="non-scaling-stroke"/><path transform="translate(9.60,-4.50) scale(0.860)" d="M2 1 L8 1 M0.4 4 L9.6 4 M4 4 Q4 8.6 0.8 10 M6 4 L6 9 Q6 10 7 10 L9.6 10 L9.6 8.4" vector-effect="non-scaling-stroke"/></g></g><g transform="translate(545.7,562.1) rotate(-22.6)"><g fill="none" stroke="rgba(90,100,190,0.18)" stroke-width="0.9" stroke-linecap="round" stroke-linejoin="round"><path transform="translate(-18.00,-4.50) scale(0.860)" d="M2.2 1 L2.2 6 Q2.2 9 0.5 10 M2.2 1 L8 1 L8 10 M0.5 6 L9.6 6 M4 3 L5.2 4.4" vector-effect="non-scaling-stroke"/><path transform="translate(-8.80,-4.50) scale(0.860)" d="M1 2 L9 2 M5 0 L2 5.6 L8.6 5.6 M5 3.6 L5 9.4 Q5 10 4 10 M3 7 L1.4 9.2 M7 7 L9 9.2" vector-effect="non-scaling-stroke"/><path transform="translate(0.40,-4.50) scale(0.860)" d="M0.6 0.8 L1.6 1.8 M0.2 3.8 L1.6 4.8 M0.4 9.6 L2 6.6 M4.6 0.4 L3.6 2.4 M3.8 2 L9 2 M6.6 0 L6.6 4 M3 4 L9.6 4 M4 6 h5.2 v4 h-5.2 Z" vector-effect="non-scaling-stroke"/><path transform="translate(9.60,-4.50) scale(0.860)" d="M2 1 L8 1 M0.4 4 L9.6 4 M4 4 Q4 8.6 0.8 10 M6 4 L6 9 Q6 10 7 10 L9.6 10 L9.6 8.4" vector-effect="non-scaling-stroke"/></g></g><g transform="translate(620.9,530.8) rotate(-22.6)"><g fill="none" stroke="rgba(90,100,190,0.18)" stroke-width="0.9" stroke-linecap="round" stroke-linejoin="round"><path transform="translate(-18.00,-4.50) scale(0.860)" d="M2.2 1 L2.2 6 Q2.2 9 0.5 10 M2.2 1 L8 1 L8 10 M0.5 6 L9.6 6 M4 3 L5.2 4.4" vector-effect="non-scaling-stroke"/><path transform="translate(-8.80,-4.50) scale(0.860)" d="M1 2 L9 2 M5 0 L2 5.6 L8.6 5.6 M5 3.6 L5 9.4 Q5 10 4 10 M3 7 L1.4 9.2 M7 7 L9 9.2" vector-effect="non-scaling-stroke"/><path transform="translate(0.40,-4.50) scale(0.860)" d="M0.6 0.8 L1.6 1.8 M0.2 3.8 L1.6 4.8 M0.4 9.6 L2 6.6 M4.6 0.4 L3.6 2.4 M3.8 2 L9 2 M6.6 0 L6.6 4 M3 4 L9.6 4 M4 6 h5.2 v4 h-5.2 Z" vector-effect="non-scaling-stroke"/><path transform="translate(9.60,-4.50) scale(0.860)" d="M2 1 L8 1 M0.4 4 L9.6 4 M4 4 Q4 8.6 0.8 10 M6 4 L6 9 Q6 10 7 10 L9.6 10 L9.6 8.4" vector-effect="non-scaling-stroke"/></g></g><g transform="translate(696.1,499.5) rotate(-22.6)"><g fill="none" stroke="rgba(90,100,190,0.18)" stroke-width="0.9" stroke-linecap="round" stroke-linejoin="round"><path transform="translate(-18.00,-4.50) scale(0.860)" d="M2.2 1 L2.2 6 Q2.2 9 0.5 10 M2.2 1 L8 1 L8 10 M0.5 6 L9.6 6 M4 3 L5.2 4.4" vector-effect="non-scaling-stroke"/><path transform="translate(-8.80,-4.50) scale(0.860)" d="M1 2 L9 2 M5 0 L2 5.6 L8.6 5.6 M5 3.6 L5 9.4 Q5 10 4 10 M3 7 L1.4 9.2 M7 7 L9 9.2" vector-effect="non-scaling-stroke"/><path transform="translate(0.40,-4.50) scale(0.860)" d="M0.6 0.8 L1.6 1.8 M0.2 3.8 L1.6 4.8 M0.4 9.6 L2 6.6 M4.6 0.4 L3.6 2.4 M3.8 2 L9 2 M6.6 0 L6.6 4 M3 4 L9.6 4 M4 6 h5.2 v4 h-5.2 Z" vector-effect="non-scaling-stroke"/><path transform="translate(9.60,-4.50) scale(0.860)" d="M2 1 L8 1 M0.4 4 L9.6 4 M4 4 Q4 8.6 0.8 10 M6 4 L6 9 Q6 10 7 10 L9.6 10 L9.6 8.4" vector-effect="non-scaling-stroke"/></g></g><g transform="translate(771.3,468.2) rotate(-22.6)"><g fill="none" stroke="rgba(90,100,190,0.18)" stroke-width="0.9" stroke-linecap="round" stroke-linejoin="round"><path transform="translate(-18.00,-4.50) scale(0.860)" d="M2.2 1 L2.2 6 Q2.2 9 0.5 10 M2.2 1 L8 1 L8 10 M0.5 6 L9.6 6 M4 3 L5.2 4.4" vector-effect="non-scaling-stroke"/><path transform="translate(-8.80,-4.50) scale(0.860)" d="M1 2 L9 2 M5 0 L2 5.6 L8.6 5.6 M5 3.6 L5 9.4 Q5 10 4 10 M3 7 L1.4 9.2 M7 7 L9 9.2" vector-effect="non-scaling-stroke"/><path transform="translate(0.40,-4.50) scale(0.860)" d="M0.6 0.8 L1.6 1.8 M0.2 3.8 L1.6 4.8 M0.4 9.6 L2 6.6 M4.6 0.4 L3.6 2.4 M3.8 2 L9 2 M6.6 0 L6.6 4 M3 4 L9.6 4 M4 6 h5.2 v4 h-5.2 Z" vector-effect="non-scaling-stroke"/><path transform="translate(9.60,-4.50) scale(0.860)" d="M2 1 L8 1 M0.4 4 L9.6 4 M4 4 Q4 8.6 0.8 10 M6 4 L6 9 Q6 10 7 10 L9.6 10 L9.6 8.4" vector-effect="non-scaling-stroke"/></g></g><g transform="translate(357.5,735.2) rotate(-22.6)"><g fill="none" stroke="rgba(90,100,190,0.18)" stroke-width="0.9" stroke-linecap="round" stroke-linejoin="round"><path transform="translate(-18.00,-4.50) scale(0.860)" d="M2.2 1 L2.2 6 Q2.2 9 0.5 10 M2.2 1 L8 1 L8 10 M0.5 6 L9.6 6 M4 3 L5.2 4.4" vector-effect="non-scaling-stroke"/><path transform="translate(-8.80,-4.50) scale(0.860)" d="M1 2 L9 2 M5 0 L2 5.6 L8.6 5.6 M5 3.6 L5 9.4 Q5 10 4 10 M3 7 L1.4 9.2 M7 7 L9 9.2" vector-effect="non-scaling-stroke"/><path transform="translate(0.40,-4.50) scale(0.860)" d="M0.6 0.8 L1.6 1.8 M0.2 3.8 L1.6 4.8 M0.4 9.6 L2 6.6 M4.6 0.4 L3.6 2.4 M3.8 2 L9 2 M6.6 0 L6.6 4 M3 4 L9.6 4 M4 6 h5.2 v4 h-5.2 Z" vector-effect="non-scaling-stroke"/><path transform="translate(9.60,-4.50) scale(0.860)" d="M2 1 L8 1 M0.4 4 L9.6 4 M4 4 Q4 8.6 0.8 10 M6 4 L6 9 Q6 10 7 10 L9.6 10 L9.6 8.4" vector-effect="non-scaling-stroke"/></g></g><g transform="translate(432.7,703.9) rotate(-22.6)"><g fill="none" stroke="rgba(90,100,190,0.18)" stroke-width="0.9" stroke-linecap="round" stroke-linejoin="round"><path transform="translate(-18.00,-4.50) scale(0.860)" d="M2.2 1 L2.2 6 Q2.2 9 0.5 10 M2.2 1 L8 1 L8 10 M0.5 6 L9.6 6 M4 3 L5.2 4.4" vector-effect="non-scaling-stroke"/><path transform="translate(-8.80,-4.50) scale(0.860)" d="M1 2 L9 2 M5 0 L2 5.6 L8.6 5.6 M5 3.6 L5 9.4 Q5 10 4 10 M3 7 L1.4 9.2 M7 7 L9 9.2" vector-effect="non-scaling-stroke"/><path transform="translate(0.40,-4.50) scale(0.860)" d="M0.6 0.8 L1.6 1.8 M0.2 3.8 L1.6 4.8 M0.4 9.6 L2 6.6 M4.6 0.4 L3.6 2.4 M3.8 2 L9 2 M6.6 0 L6.6 4 M3 4 L9.6 4 M4 6 h5.2 v4 h-5.2 Z" vector-effect="non-scaling-stroke"/><path transform="translate(9.60,-4.50) scale(0.860)" d="M2 1 L8 1 M0.4 4 L9.6 4 M4 4 Q4 8.6 0.8 10 M6 4 L6 9 Q6 10 7 10 L9.6 10 L9.6 8.4" vector-effect="non-scaling-stroke"/></g></g><g transform="translate(507.9,672.6) rotate(-22.6)"><g fill="none" stroke="rgba(90,100,190,0.18)" stroke-width="0.9" stroke-linecap="round" stroke-linejoin="round"><path transform="translate(-18.00,-4.50) scale(0.860)" d="M2.2 1 L2.2 6 Q2.2 9 0.5 10 M2.2 1 L8 1 L8 10 M0.5 6 L9.6 6 M4 3 L5.2 4.4" vector-effect="non-scaling-stroke"/><path transform="translate(-8.80,-4.50) scale(0.860)" d="M1 2 L9 2 M5 0 L2 5.6 L8.6 5.6 M5 3.6 L5 9.4 Q5 10 4 10 M3 7 L1.4 9.2 M7 7 L9 9.2" vector-effect="non-scaling-stroke"/><path transform="translate(0.40,-4.50) scale(0.860)" d="M0.6 0.8 L1.6 1.8 M0.2 3.8 L1.6 4.8 M0.4 9.6 L2 6.6 M4.6 0.4 L3.6 2.4 M3.8 2 L9 2 M6.6 0 L6.6 4 M3 4 L9.6 4 M4 6 h5.2 v4 h-5.2 Z" vector-effect="non-scaling-stroke"/><path transform="translate(9.60,-4.50) scale(0.860)" d="M2 1 L8 1 M0.4 4 L9.6 4 M4 4 Q4 8.6 0.8 10 M6 4 L6 9 Q6 10 7 10 L9.6 10 L9.6 8.4" vector-effect="non-scaling-stroke"/></g></g><g transform="translate(583.1,641.3) rotate(-22.6)"><g fill="none" stroke="rgba(90,100,190,0.18)" stroke-width="0.9" stroke-linecap="round" stroke-linejoin="round"><path transform="translate(-18.00,-4.50) scale(0.860)" d="M2.2 1 L2.2 6 Q2.2 9 0.5 10 M2.2 1 L8 1 L8 10 M0.5 6 L9.6 6 M4 3 L5.2 4.4" vector-effect="non-scaling-stroke"/><path transform="translate(-8.80,-4.50) scale(0.860)" d="M1 2 L9 2 M5 0 L2 5.6 L8.6 5.6 M5 3.6 L5 9.4 Q5 10 4 10 M3 7 L1.4 9.2 M7 7 L9 9.2" vector-effect="non-scaling-stroke"/><path transform="translate(0.40,-4.50) scale(0.860)" d="M0.6 0.8 L1.6 1.8 M0.2 3.8 L1.6 4.8 M0.4 9.6 L2 6.6 M4.6 0.4 L3.6 2.4 M3.8 2 L9 2 M6.6 0 L6.6 4 M3 4 L9.6 4 M4 6 h5.2 v4 h-5.2 Z" vector-effect="non-scaling-stroke"/><path transform="translate(9.60,-4.50) scale(0.860)" d="M2 1 L8 1 M0.4 4 L9.6 4 M4 4 Q4 8.6 0.8 10 M6 4 L6 9 Q6 10 7 10 L9.6 10 L9.6 8.4" vector-effect="non-scaling-stroke"/></g></g><g transform="translate(658.3,610.0) rotate(-22.6)"><g fill="none" stroke="rgba(90,100,190,0.18)" stroke-width="0.9" stroke-linecap="round" stroke-linejoin="round"><path transform="translate(-18.00,-4.50) scale(0.860)" d="M2.2 1 L2.2 6 Q2.2 9 0.5 10 M2.2 1 L8 1 L8 10 M0.5 6 L9.6 6 M4 3 L5.2 4.4" vector-effect="non-scaling-stroke"/><path transform="translate(-8.80,-4.50) scale(0.860)" d="M1 2 L9 2 M5 0 L2 5.6 L8.6 5.6 M5 3.6 L5 9.4 Q5 10 4 10 M3 7 L1.4 9.2 M7 7 L9 9.2" vector-effect="non-scaling-stroke"/><path transform="translate(0.40,-4.50) scale(0.860)" d="M0.6 0.8 L1.6 1.8 M0.2 3.8 L1.6 4.8 M0.4 9.6 L2 6.6 M4.6 0.4 L3.6 2.4 M3.8 2 L9 2 M6.6 0 L6.6 4 M3 4 L9.6 4 M4 6 h5.2 v4 h-5.2 Z" vector-effect="non-scaling-stroke"/><path transform="translate(9.60,-4.50) scale(0.860)" d="M2 1 L8 1 M0.4 4 L9.6 4 M4 4 Q4 8.6 0.8 10 M6 4 L6 9 Q6 10 7 10 L9.6 10 L9.6 8.4" vector-effect="non-scaling-stroke"/></g></g><g transform="translate(733.5,578.7) rotate(-22.6)"><g fill="none" stroke="rgba(90,100,190,0.18)" stroke-width="0.9" stroke-linecap="round" stroke-linejoin="round"><path transform="translate(-18.00,-4.50) scale(0.860)" d="M2.2 1 L2.2 6 Q2.2 9 0.5 10 M2.2 1 L8 1 L8 10 M0.5 6 L9.6 6 M4 3 L5.2 4.4" vector-effect="non-scaling-stroke"/><path transform="translate(-8.80,-4.50) scale(0.860)" d="M1 2 L9 2 M5 0 L2 5.6 L8.6 5.6 M5 3.6 L5 9.4 Q5 10 4 10 M3 7 L1.4 9.2 M7 7 L9 9.2" vector-effect="non-scaling-stroke"/><path transform="translate(0.40,-4.50) scale(0.860)" d="M0.6 0.8 L1.6 1.8 M0.2 3.8 L1.6 4.8 M0.4 9.6 L2 6.6 M4.6 0.4 L3.6 2.4 M3.8 2 L9 2 M6.6 0 L6.6 4 M3 4 L9.6 4 M4 6 h5.2 v4 h-5.2 Z" vector-effect="non-scaling-stroke"/><path transform="translate(9.60,-4.50) scale(0.860)" d="M2 1 L8 1 M0.4 4 L9.6 4 M4 4 Q4 8.6 0.8 10 M6 4 L6 9 Q6 10 7 10 L9.6 10 L9.6 8.4" vector-effect="non-scaling-stroke"/></g></g><g transform="translate(808.7,547.4) rotate(-22.6)"><g fill="none" stroke="rgba(90,100,190,0.18)" stroke-width="0.9" stroke-linecap="round" stroke-linejoin="round"><path transform="translate(-18.00,-4.50) scale(0.860)" d="M2.2 1 L2.2 6 Q2.2 9 0.5 10 M2.2 1 L8 1 L8 10 M0.5 6 L9.6 6 M4 3 L5.2 4.4" vector-effect="non-scaling-stroke"/><path transform="translate(-8.80,-4.50) scale(0.860)" d="M1 2 L9 2 M5 0 L2 5.6 L8.6 5.6 M5 3.6 L5 9.4 Q5 10 4 10 M3 7 L1.4 9.2 M7 7 L9 9.2" vector-effect="non-scaling-stroke"/><path transform="translate(0.40,-4.50) scale(0.860)" d="M0.6 0.8 L1.6 1.8 M0.2 3.8 L1.6 4.8 M0.4 9.6 L2 6.6 M4.6 0.4 L3.6 2.4 M3.8 2 L9 2 M6.6 0 L6.6 4 M3 4 L9.6 4 M4 6 h5.2 v4 h-5.2 Z" vector-effect="non-scaling-stroke"/><path transform="translate(9.60,-4.50) scale(0.860)" d="M2 1 L8 1 M0.4 4 L9.6 4 M4 4 Q4 8.6 0.8 10 M6 4 L6 9 Q6 10 7 10 L9.6 10 L9.6 8.4" vector-effect="non-scaling-stroke"/></g></g><g transform="translate(620.2,719.7) rotate(-22.6)"><g fill="none" stroke="rgba(90,100,190,0.18)" stroke-width="0.9" stroke-linecap="round" stroke-linejoin="round"><path transform="translate(-18.00,-4.50) scale(0.860)" d="M2.2 1 L2.2 6 Q2.2 9 0.5 10 M2.2 1 L8 1 L8 10 M0.5 6 L9.6 6 M4 3 L5.2 4.4" vector-effect="non-scaling-stroke"/><path transform="translate(-8.80,-4.50) scale(0.860)" d="M1 2 L9 2 M5 0 L2 5.6 L8.6 5.6 M5 3.6 L5 9.4 Q5 10 4 10 M3 7 L1.4 9.2 M7 7 L9 9.2" vector-effect="non-scaling-stroke"/><path transform="translate(0.40,-4.50) scale(0.860)" d="M0.6 0.8 L1.6 1.8 M0.2 3.8 L1.6 4.8 M0.4 9.6 L2 6.6 M4.6 0.4 L3.6 2.4 M3.8 2 L9 2 M6.6 0 L6.6 4 M3 4 L9.6 4 M4 6 h5.2 v4 h-5.2 Z" vector-effect="non-scaling-stroke"/><path transform="translate(9.60,-4.50) scale(0.860)" d="M2 1 L8 1 M0.4 4 L9.6 4 M4 4 Q4 8.6 0.8 10 M6 4 L6 9 Q6 10 7 10 L9.6 10 L9.6 8.4" vector-effect="non-scaling-stroke"/></g></g><g transform="translate(695.4,688.4) rotate(-22.6)"><g fill="none" stroke="rgba(90,100,190,0.18)" stroke-width="0.9" stroke-linecap="round" stroke-linejoin="round"><path transform="translate(-18.00,-4.50) scale(0.860)" d="M2.2 1 L2.2 6 Q2.2 9 0.5 10 M2.2 1 L8 1 L8 10 M0.5 6 L9.6 6 M4 3 L5.2 4.4" vector-effect="non-scaling-stroke"/><path transform="translate(-8.80,-4.50) scale(0.860)" d="M1 2 L9 2 M5 0 L2 5.6 L8.6 5.6 M5 3.6 L5 9.4 Q5 10 4 10 M3 7 L1.4 9.2 M7 7 L9 9.2" vector-effect="non-scaling-stroke"/><path transform="translate(0.40,-4.50) scale(0.860)" d="M0.6 0.8 L1.6 1.8 M0.2 3.8 L1.6 4.8 M0.4 9.6 L2 6.6 M4.6 0.4 L3.6 2.4 M3.8 2 L9 2 M6.6 0 L6.6 4 M3 4 L9.6 4 M4 6 h5.2 v4 h-5.2 Z" vector-effect="non-scaling-stroke"/><path transform="translate(9.60,-4.50) scale(0.860)" d="M2 1 L8 1 M0.4 4 L9.6 4 M4 4 Q4 8.6 0.8 10 M6 4 L6 9 Q6 10 7 10 L9.6 10 L9.6 8.4" vector-effect="non-scaling-stroke"/></g></g><g transform="translate(770.6,657.1) rotate(-22.6)"><g fill="none" stroke="rgba(90,100,190,0.18)" stroke-width="0.9" stroke-linecap="round" stroke-linejoin="round"><path transform="translate(-18.00,-4.50) scale(0.860)" d="M2.2 1 L2.2 6 Q2.2 9 0.5 10 M2.2 1 L8 1 L8 10 M0.5 6 L9.6 6 M4 3 L5.2 4.4" vector-effect="non-scaling-stroke"/><path transform="translate(-8.80,-4.50) scale(0.860)" d="M1 2 L9 2 M5 0 L2 5.6 L8.6 5.6 M5 3.6 L5 9.4 Q5 10 4 10 M3 7 L1.4 9.2 M7 7 L9 9.2" vector-effect="non-scaling-stroke"/><path transform="translate(0.40,-4.50) scale(0.860)" d="M0.6 0.8 L1.6 1.8 M0.2 3.8 L1.6 4.8 M0.4 9.6 L2 6.6 M4.6 0.4 L3.6 2.4 M3.8 2 L9 2 M6.6 0 L6.6 4 M3 4 L9.6 4 M4 6 h5.2 v4 h-5.2 Z" vector-effect="non-scaling-stroke"/><path transform="translate(9.60,-4.50) scale(0.860)" d="M2 1 L8 1 M0.4 4 L9.6 4 M4 4 Q4 8.6 0.8 10 M6 4 L6 9 Q6 10 7 10 L9.6 10 L9.6 8.4" vector-effect="non-scaling-stroke"/></g></g></svg>
</body></html>
